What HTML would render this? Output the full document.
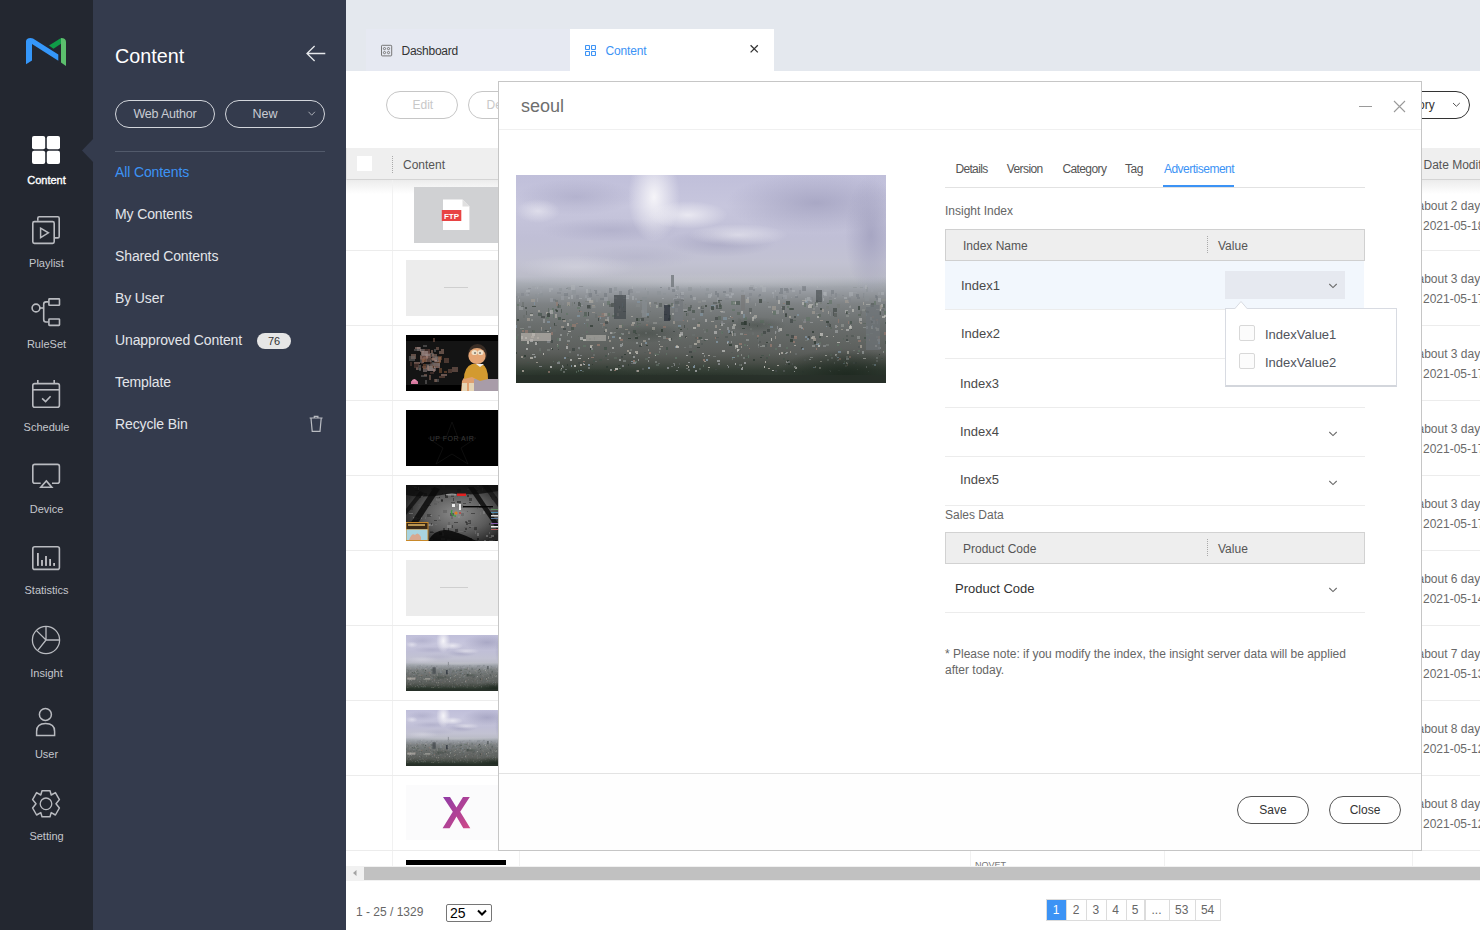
<!DOCTYPE html>
<html><head><meta charset="utf-8">
<style>
*{box-sizing:border-box;margin:0;padding:0}
html,body{width:1480px;height:930px;overflow:hidden;background:#fff;font-family:"Liberation Sans",sans-serif;position:relative}
.a{position:absolute}
.t{position:absolute;white-space:nowrap;line-height:1}
/* left bar */
#nav{left:0;top:0;width:93px;height:930px;background:#232730}
.nl{position:absolute;left:0;width:93px;text-align:center;font-size:11px;color:#c3c6cc;line-height:1;white-space:nowrap}
#side{left:93px;top:0;width:253px;height:930px;background:#343b4d}
.sl{position:absolute;left:22px;font-size:14px;color:#e6e8ec;line-height:1;white-space:nowrap}
/* main */
#tabbar{left:346px;top:0;width:1134px;height:71px;background:#e4e8ee}
.pill{position:absolute;border-radius:15px;text-align:center;white-space:nowrap}
.rowb{position:absolute;left:346px;width:1134px;height:1px;background:#ececec}
.thumb{position:absolute;left:406px;width:92px;height:56px}
.dt{position:absolute;left:1419px;font-size:12px;color:#6a6a6a;line-height:1;white-space:nowrap}

.seoul{background:
 linear-gradient(180deg,rgba(0,0,0,0) 0,rgba(0,0,0,0) 91%,#2e372f 93%,#26302a 100%),
 radial-gradient(ellipse 8% 30% at 12% 70%,rgba(40,50,45,.6),transparent),
 radial-gradient(ellipse 10% 12% at 60% 72%,rgba(60,70,65,.5),transparent),
 radial-gradient(ellipse 12% 20% at 30% 82%,rgba(50,60,50,.55),transparent),
 radial-gradient(ellipse 15% 15% at 80% 75%,rgba(70,75,80,.5),transparent),
 linear-gradient(180deg,#b7b6d2 0%,#c5c4dc 20%,#b9b8d2 35%,#aeaec8 45%,#a9abbd 53%,#9ea2ad 56%,#8f9298 60%,#787b7e 66%,#6a6c6d 75%,#5e605f 85%,#4f5350 91%),
 #888}
.seoul .sun{position:absolute;left:22%;top:0;width:30%;height:45%;background:radial-gradient(ellipse 50% 60% at 50% 40%,rgba(240,240,248,.8),rgba(240,240,248,0))}
.seoul .sun2{position:absolute;left:45%;top:18%;width:30%;height:28%;background:radial-gradient(ellipse 50% 50% at 50% 50%,rgba(225,225,235,.6),rgba(225,225,235,0))}
</style></head><body>
<svg width="0" height="0" style="position:absolute"><symbol id="seoulimg" viewBox="0 0 370 208" preserveAspectRatio="none"><defs><linearGradient id="sky" x1="0" y1="0" x2="0" y2="1"><stop offset="0" stop-color="#c0bfda"/><stop offset="0.15" stop-color="#c7c6dd"/><stop offset="0.3" stop-color="#c0bfd6"/><stop offset="0.42" stop-color="#c2c2d2"/><stop offset="0.49" stop-color="#bbbcc8"/><stop offset="0.52" stop-color="#a9adb5"/><stop offset="0.56" stop-color="#979ba1"/><stop offset="0.62" stop-color="#7e8284"/><stop offset="0.72" stop-color="#6a6e6d"/><stop offset="0.85" stop-color="#5c5f5c"/><stop offset="0.9" stop-color="#4a4f49"/><stop offset="0.94" stop-color="#343e35"/><stop offset="1" stop-color="#273128"/></linearGradient><radialGradient id="sun" cx="0.5" cy="0.5" r="0.5"><stop offset="0" stop-color="#f8f7fa" stop-opacity="0.95"/><stop offset="1" stop-color="#f8f7fa" stop-opacity="0"/></radialGradient><radialGradient id="drk" cx="0.5" cy="0.5" r="0.5"><stop offset="0" stop-color="#9998b8" stop-opacity="0.65"/><stop offset="1" stop-color="#9998b8" stop-opacity="0"/></radialGradient><radialGradient id="tree" cx="0.5" cy="0.5" r="0.5"><stop offset="0" stop-color="#1f2a21" stop-opacity="1"/><stop offset="1" stop-color="#1f2a21" stop-opacity="0"/></radialGradient><radialGradient id="haze" cx="0.5" cy="0.5" r="0.5"><stop offset="0" stop-color="#c4c5cc" stop-opacity="0.6"/><stop offset="1" stop-color="#c4c5cc" stop-opacity="0"/></radialGradient></defs><rect width="370" height="208" fill="url(#sky)"/><ellipse cx="300" cy="28" rx="90" ry="30" fill="url(#drk)"/><ellipse cx="355" cy="60" rx="26" ry="60" fill="url(#drk)"/><ellipse cx="60" cy="22" rx="60" ry="18" fill="url(#drk)" opacity="0.6"/><ellipse cx="95" cy="55" rx="70" ry="12" fill="url(#drk)" opacity="0.55"/><ellipse cx="205" cy="68" rx="55" ry="14" fill="url(#drk)" opacity="0.75"/><ellipse cx="120" cy="82" rx="60" ry="12" fill="url(#drk)" opacity="0.35"/><ellipse cx="138" cy="22" rx="26" ry="45" fill="url(#sun)"/><ellipse cx="172" cy="40" rx="40" ry="14" fill="url(#sun)" opacity="0.75"/><ellipse cx="222" cy="60" rx="50" ry="11" fill="url(#sun)" opacity="0.55"/><ellipse cx="22" cy="36" rx="22" ry="12" fill="url(#sun)" opacity="0.5"/><ellipse cx="60" cy="92" rx="60" ry="12" fill="url(#sun)" opacity="0.25"/><ellipse cx="190" cy="106" rx="190" ry="8" fill="url(#haze)"/><rect x="274" y="164" width="3" height="3" fill="#2f3a33" opacity="0.77"/><rect x="172" y="112" width="4" height="4" fill="#8c9196" opacity="0.50"/><rect x="174" y="120" width="2" height="3" fill="#6f757b" opacity="0.50"/><rect x="271" y="131" width="2" height="2" fill="#617366" opacity="0.64"/><rect x="295" y="124" width="1" height="3" fill="#8c9196" opacity="0.50"/><rect x="360" y="121" width="1" height="4" fill="#8c9196" opacity="0.50"/><rect x="107" y="185" width="3" height="2" fill="#767b78" opacity="0.86"/><rect x="358" y="126" width="2" height="4" fill="#617366" opacity="0.61"/><rect x="134" y="136" width="1" height="1" fill="#6a6f6d" opacity="0.65"/><rect x="302" y="139" width="3" height="3" fill="#5a655d" opacity="0.67"/><rect x="131" y="116" width="2" height="4" fill="#8c9196" opacity="0.50"/><rect x="261" y="151" width="1" height="3" fill="#9a9d9e" opacity="0.72"/><rect x="132" y="192" width="2" height="2" fill="#8396a4" opacity="0.88"/><rect x="214" y="141" width="1" height="1" fill="#c4c3bd" opacity="0.68"/><rect x="353" y="164" width="1" height="2" fill="#947a70" opacity="0.77"/><rect x="131" y="140" width="2" height="3" fill="#535957" opacity="0.67"/><rect x="289" y="161" width="2" height="2" fill="#8396a4" opacity="0.76"/><rect x="34" y="191" width="2" height="2" fill="#b3b4b2" opacity="0.88"/><rect x="342" y="139" width="3" height="2" fill="#5a655d" opacity="0.67"/><rect x="296" y="136" width="3" height="3" fill="#a39d94" opacity="0.66"/><rect x="60" y="196" width="1" height="2" fill="#617366" opacity="0.90"/><rect x="274" y="113" width="2" height="2" fill="#7f848a" opacity="0.50"/><rect x="362" y="123" width="3" height="4" fill="#b0b3b8" opacity="0.50"/><rect x="48" y="182" width="2" height="2" fill="#8396a4" opacity="0.84"/><rect x="161" y="119" width="1" height="4" fill="#b0b3b8" opacity="0.50"/><rect x="341" y="122" width="3" height="2" fill="#6f757b" opacity="0.50"/><rect x="181" y="149" width="3" height="2" fill="#a39d94" opacity="0.71"/><rect x="334" y="150" width="1" height="3" fill="#c4c3bd" opacity="0.71"/><rect x="185" y="164" width="2" height="1" fill="#8e928f" opacity="0.77"/><rect x="203" y="154" width="2" height="1" fill="#b2afa7" opacity="0.73"/><rect x="246" y="170" width="3" height="2" fill="#8e928f" opacity="0.79"/><rect x="98" y="182" width="3" height="2" fill="#5a655d" opacity="0.84"/><rect x="215" y="166" width="1" height="2" fill="#8e928f" opacity="0.78"/><rect x="101" y="138" width="2" height="3" fill="#b2afa7" opacity="0.66"/><rect x="238" y="140" width="3" height="3" fill="#b2afa7" opacity="0.67"/><rect x="64" y="189" width="2" height="2" fill="#b2afa7" opacity="0.87"/><rect x="192" y="192" width="2" height="1" fill="#b2afa7" opacity="0.88"/><rect x="177" y="191" width="2" height="2" fill="#8396a4" opacity="0.88"/><rect x="289" y="125" width="3" height="3" fill="#8396a4" opacity="0.61"/><rect x="205" y="136" width="4" height="2" fill="#9a9d9e" opacity="0.66"/><rect x="217" y="127" width="3" height="2" fill="#c4c3bd" opacity="0.62"/><rect x="15" y="164" width="2" height="1" fill="#84888a" opacity="0.77"/><rect x="41" y="187" width="3" height="2" fill="#84888a" opacity="0.86"/><rect x="130" y="146" width="3" height="1" fill="#767b78" opacity="0.70"/><rect x="334" y="130" width="1" height="2" fill="#8e928f" opacity="0.63"/><rect x="321" y="184" width="2" height="2" fill="#84888a" opacity="0.85"/><rect x="112" y="157" width="2" height="2" fill="#a39d94" opacity="0.74"/><rect x="303" y="192" width="2" height="2" fill="#b2afa7" opacity="0.89"/><rect x="58" y="150" width="2" height="2" fill="#767b78" opacity="0.71"/><rect x="225" y="193" width="2" height="2" fill="#9a9d9e" opacity="0.89"/><rect x="121" y="143" width="4" height="3" fill="#5a655d" opacity="0.68"/><rect x="330" y="164" width="2" height="2" fill="#3f4644" opacity="0.77"/><rect x="177" y="152" width="3" height="2" fill="#c4c3bd" opacity="0.72"/><rect x="96" y="161" width="3" height="2" fill="#8396a4" opacity="0.76"/><rect x="350" y="112" width="2" height="5" fill="#8c9196" opacity="0.50"/><rect x="45" y="151" width="3" height="2" fill="#a39d94" opacity="0.72"/><rect x="50" y="113" width="2" height="3" fill="#6f757b" opacity="0.50"/><rect x="346" y="134" width="3" height="2" fill="#8e928f" opacity="0.65"/><rect x="267" y="183" width="2" height="2" fill="#45524a" opacity="0.85"/><rect x="319" y="155" width="3" height="3" fill="#9a9d9e" opacity="0.73"/><rect x="111" y="175" width="2" height="2" fill="#a39d94" opacity="0.82"/><rect x="10" y="173" width="2" height="2" fill="#b3b4b2" opacity="0.81"/><rect x="93" y="113" width="3" height="5" fill="#6f757b" opacity="0.50"/><rect x="159" y="126" width="4" height="3" fill="#45524a" opacity="0.62"/><rect x="311" y="184" width="2" height="2" fill="#767b78" opacity="0.85"/><rect x="172" y="187" width="2" height="1" fill="#9a9d9e" opacity="0.86"/><rect x="160" y="170" width="2" height="2" fill="#a39d94" opacity="0.79"/><rect x="177" y="122" width="3" height="3" fill="#b0b3b8" opacity="0.50"/><rect x="157" y="156" width="2" height="1" fill="#3f4644" opacity="0.74"/><rect x="32" y="133" width="1" height="4" fill="#5a655d" opacity="0.64"/><rect x="362" y="172" width="3" height="2" fill="#84888a" opacity="0.80"/><rect x="45" y="121" width="3" height="4" fill="#9ea2a8" opacity="0.50"/><rect x="50" y="171" width="2" height="3" fill="#b3b4b2" opacity="0.80"/><rect x="69" y="126" width="4" height="1" fill="#767b78" opacity="0.61"/><rect x="40" y="114" width="2" height="1" fill="#9ea2a8" opacity="0.50"/><rect x="44" y="159" width="2" height="2" fill="#9a9d9e" opacity="0.75"/><rect x="116" y="147" width="3" height="2" fill="#b2afa7" opacity="0.70"/><rect x="51" y="189" width="1" height="2" fill="#2f3a33" opacity="0.87"/><rect x="349" y="135" width="3" height="2" fill="#6a6f6d" opacity="0.65"/><rect x="94" y="157" width="3" height="2" fill="#b3b4b2" opacity="0.74"/><rect x="319" y="179" width="2" height="2" fill="#b3b4b2" opacity="0.83"/><rect x="242" y="171" width="1" height="2" fill="#6a6f6d" opacity="0.80"/><rect x="187" y="184" width="2" height="2" fill="#947a70" opacity="0.85"/><rect x="120" y="151" width="3" height="1" fill="#617366" opacity="0.72"/><rect x="56" y="115" width="4" height="4" fill="#8c9196" opacity="0.50"/><rect x="31" y="174" width="3" height="2" fill="#767b78" opacity="0.81"/><rect x="231" y="122" width="2" height="2" fill="#b0b3b8" opacity="0.50"/><rect x="261" y="190" width="2" height="1" fill="#b2afa7" opacity="0.88"/><rect x="298" y="166" width="2" height="3" fill="#2f3a33" opacity="0.78"/><rect x="367" y="113" width="2" height="2" fill="#9ea2a8" opacity="0.50"/><rect x="12" y="118" width="2" height="1" fill="#7f848a" opacity="0.50"/><rect x="129" y="167" width="2" height="2" fill="#8396a4" opacity="0.78"/><rect x="171" y="138" width="2" height="3" fill="#6a6f6d" opacity="0.66"/><rect x="143" y="142" width="3" height="1" fill="#8e928f" opacity="0.68"/><rect x="303" y="119" width="3" height="3" fill="#9ea2a8" opacity="0.50"/><rect x="12" y="151" width="3" height="2" fill="#84888a" opacity="0.72"/><rect x="249" y="169" width="2" height="3" fill="#535957" opacity="0.79"/><rect x="120" y="178" width="2" height="1" fill="#c4c3bd" opacity="0.82"/><rect x="264" y="113" width="3" height="4" fill="#6f757b" opacity="0.50"/><rect x="360" y="144" width="2" height="2" fill="#947a70" opacity="0.69"/><rect x="25" y="141" width="4" height="2" fill="#3f4644" opacity="0.68"/><rect x="77" y="125" width="1" height="3" fill="#8e928f" opacity="0.61"/><rect x="23" y="111" width="4" height="3" fill="#9ea2a8" opacity="0.50"/><rect x="309" y="113" width="4" height="3" fill="#9ea2a8" opacity="0.50"/><rect x="88" y="172" width="3" height="1" fill="#45524a" opacity="0.80"/><rect x="90" y="115" width="1" height="3" fill="#9ea2a8" opacity="0.50"/><rect x="308" y="114" width="3" height="3" fill="#9ea2a8" opacity="0.50"/><rect x="72" y="192" width="2" height="2" fill="#767b78" opacity="0.88"/><rect x="31" y="156" width="2" height="1" fill="#c4c3bd" opacity="0.74"/><rect x="317" y="161" width="1" height="1" fill="#b2afa7" opacity="0.76"/><rect x="211" y="152" width="2" height="3" fill="#9a9d9e" opacity="0.72"/><rect x="114" y="189" width="2" height="2" fill="#3f4644" opacity="0.87"/><rect x="51" y="158" width="2" height="3" fill="#8e928f" opacity="0.74"/><rect x="116" y="180" width="1" height="1" fill="#3f4644" opacity="0.84"/><rect x="296" y="170" width="3" height="2" fill="#8e928f" opacity="0.79"/><rect x="259" y="115" width="1" height="2" fill="#b0b3b8" opacity="0.50"/><rect x="328" y="186" width="1" height="2" fill="#617366" opacity="0.86"/><rect x="206" y="175" width="3" height="2" fill="#b3b4b2" opacity="0.81"/><rect x="164" y="159" width="3" height="2" fill="#9a9d9e" opacity="0.75"/><rect x="259" y="173" width="2" height="2" fill="#617366" opacity="0.80"/><rect x="119" y="158" width="2" height="1" fill="#45524a" opacity="0.75"/><rect x="106" y="168" width="1" height="3" fill="#9a9d9e" opacity="0.79"/><rect x="19" y="112" width="1" height="2" fill="#b0b3b8" opacity="0.50"/><rect x="226" y="192" width="1" height="1" fill="#b2afa7" opacity="0.88"/><rect x="133" y="127" width="2" height="3" fill="#c4c3bd" opacity="0.62"/><rect x="35" y="173" width="2" height="1" fill="#b3b4b2" opacity="0.80"/><rect x="347" y="148" width="3" height="1" fill="#5a655d" opacity="0.71"/><rect x="84" y="148" width="3" height="1" fill="#84888a" opacity="0.71"/><rect x="346" y="176" width="2" height="3" fill="#9a9d9e" opacity="0.82"/><rect x="301" y="119" width="2" height="1" fill="#9ea2a8" opacity="0.50"/><rect x="213" y="113" width="3" height="4" fill="#7f848a" opacity="0.50"/><rect x="74" y="150" width="3" height="2" fill="#2f3a33" opacity="0.71"/><rect x="278" y="141" width="2" height="2" fill="#3f4644" opacity="0.67"/><rect x="245" y="180" width="3" height="1" fill="#45524a" opacity="0.83"/><rect x="53" y="144" width="3" height="2" fill="#84888a" opacity="0.69"/><rect x="147" y="118" width="3" height="2" fill="#8c9196" opacity="0.50"/><rect x="279" y="178" width="2" height="2" fill="#6a6f6d" opacity="0.83"/><rect x="139" y="179" width="1" height="2" fill="#c4c3bd" opacity="0.83"/><rect x="8" y="180" width="2" height="2" fill="#2f3a33" opacity="0.83"/><rect x="176" y="143" width="3" height="2" fill="#84888a" opacity="0.68"/><rect x="296" y="156" width="2" height="2" fill="#2f3a33" opacity="0.74"/><rect x="106" y="128" width="1" height="4" fill="#8396a4" opacity="0.62"/><rect x="344" y="136" width="2" height="3" fill="#6a6f6d" opacity="0.66"/><rect x="33" y="113" width="4" height="2" fill="#b0b3b8" opacity="0.50"/><rect x="310" y="169" width="3" height="2" fill="#767b78" opacity="0.79"/><rect x="34" y="152" width="1" height="2" fill="#8396a4" opacity="0.72"/><rect x="1" y="144" width="2" height="2" fill="#2f3a33" opacity="0.69"/><rect x="337" y="187" width="2" height="2" fill="#535957" opacity="0.86"/><rect x="329" y="183" width="2" height="2" fill="#3f4644" opacity="0.85"/><rect x="79" y="186" width="2" height="1" fill="#6a6f6d" opacity="0.86"/><rect x="62" y="187" width="2" height="2" fill="#3f4644" opacity="0.86"/><rect x="211" y="166" width="2" height="2" fill="#8396a4" opacity="0.78"/><rect x="157" y="146" width="2" height="3" fill="#a39d94" opacity="0.70"/><rect x="31" y="146" width="3" height="2" fill="#8396a4" opacity="0.70"/><rect x="43" y="113" width="3" height="3" fill="#8c9196" opacity="0.50"/><rect x="121" y="147" width="1" height="3" fill="#5a655d" opacity="0.70"/><rect x="23" y="173" width="2" height="3" fill="#6a6f6d" opacity="0.81"/><rect x="315" y="137" width="3" height="4" fill="#3f4644" opacity="0.66"/><rect x="228" y="187" width="2" height="2" fill="#9a9d9e" opacity="0.86"/><rect x="58" y="127" width="1" height="2" fill="#535957" opacity="0.62"/><rect x="163" y="159" width="2" height="3" fill="#c4c3bd" opacity="0.75"/><rect x="342" y="171" width="3" height="2" fill="#535957" opacity="0.80"/><rect x="301" y="141" width="2" height="2" fill="#c4c3bd" opacity="0.68"/><rect x="252" y="149" width="3" height="1" fill="#617366" opacity="0.71"/><rect x="172" y="191" width="1" height="2" fill="#b2afa7" opacity="0.88"/><rect x="1" y="121" width="2" height="2" fill="#9ea2a8" opacity="0.50"/><rect x="347" y="152" width="3" height="1" fill="#45524a" opacity="0.72"/><rect x="278" y="196" width="1" height="1" fill="#b3b4b2" opacity="0.90"/><rect x="185" y="135" width="3" height="3" fill="#535957" opacity="0.65"/><rect x="125" y="135" width="3" height="3" fill="#84888a" opacity="0.65"/><rect x="365" y="129" width="2" height="3" fill="#b3b4b2" opacity="0.63"/><rect x="36" y="133" width="2" height="4" fill="#617366" opacity="0.64"/><rect x="91" y="184" width="2" height="1" fill="#6a6f6d" opacity="0.85"/><rect x="283" y="110" width="2" height="1" fill="#b0b3b8" opacity="0.50"/><rect x="354" y="158" width="3" height="1" fill="#767b78" opacity="0.75"/><rect x="297" y="127" width="1" height="3" fill="#8e928f" opacity="0.62"/><rect x="310" y="161" width="2" height="1" fill="#c4c3bd" opacity="0.76"/><rect x="288" y="144" width="2" height="3" fill="#84888a" opacity="0.69"/><rect x="156" y="129" width="3" height="4" fill="#8396a4" opacity="0.63"/><rect x="140" y="189" width="3" height="2" fill="#5a655d" opacity="0.87"/><rect x="289" y="123" width="2" height="4" fill="#b0b3b8" opacity="0.50"/><rect x="156" y="129" width="2" height="3" fill="#a39d94" opacity="0.63"/><rect x="234" y="110" width="4" height="4" fill="#9ea2a8" opacity="0.50"/><rect x="141" y="116" width="4" height="4" fill="#8c9196" opacity="0.50"/><rect x="277" y="166" width="2" height="2" fill="#947a70" opacity="0.78"/><rect x="88" y="122" width="4" height="4" fill="#9ea2a8" opacity="0.50"/><rect x="301" y="111" width="1" height="2" fill="#b0b3b8" opacity="0.50"/><rect x="79" y="139" width="2" height="4" fill="#6a6f6d" opacity="0.67"/><rect x="39" y="134" width="2" height="2" fill="#45524a" opacity="0.65"/><rect x="164" y="157" width="3" height="3" fill="#b3b4b2" opacity="0.74"/><rect x="202" y="133" width="3" height="1" fill="#45524a" opacity="0.64"/><rect x="21" y="167" width="1" height="1" fill="#3f4644" opacity="0.78"/><rect x="226" y="153" width="3" height="1" fill="#2f3a33" opacity="0.73"/><rect x="256" y="131" width="4" height="4" fill="#a39d94" opacity="0.63"/><rect x="38" y="148" width="1" height="3" fill="#2f3a33" opacity="0.70"/><rect x="216" y="134" width="3" height="2" fill="#617366" opacity="0.65"/><rect x="62" y="136" width="4" height="1" fill="#947a70" opacity="0.66"/><rect x="78" y="115" width="3" height="1" fill="#6f757b" opacity="0.50"/><rect x="204" y="136" width="3" height="1" fill="#b2afa7" opacity="0.65"/><rect x="1" y="115" width="3" height="3" fill="#9ea2a8" opacity="0.50"/><rect x="33" y="115" width="2" height="2" fill="#b0b3b8" opacity="0.50"/><rect x="102" y="133" width="3" height="3" fill="#8e928f" opacity="0.64"/><rect x="9" y="132" width="2" height="2" fill="#3f4644" opacity="0.64"/><rect x="219" y="170" width="3" height="3" fill="#c4c3bd" opacity="0.80"/><rect x="209" y="161" width="3" height="2" fill="#535957" opacity="0.76"/><rect x="16" y="111" width="4" height="3" fill="#9ea2a8" opacity="0.50"/><rect x="152" y="112" width="2" height="3" fill="#7f848a" opacity="0.50"/><rect x="82" y="163" width="3" height="1" fill="#6a6f6d" opacity="0.76"/><rect x="219" y="172" width="1" height="2" fill="#a39d94" opacity="0.80"/><rect x="330" y="166" width="3" height="1" fill="#8e928f" opacity="0.78"/><rect x="279" y="120" width="2" height="2" fill="#9ea2a8" opacity="0.50"/><rect x="119" y="186" width="2" height="2" fill="#617366" opacity="0.86"/><rect x="80" y="123" width="2" height="4" fill="#8c9196" opacity="0.50"/><rect x="56" y="149" width="4" height="3" fill="#947a70" opacity="0.71"/><rect x="241" y="163" width="1" height="1" fill="#45524a" opacity="0.77"/><rect x="186" y="125" width="4" height="2" fill="#9a9d9e" opacity="0.61"/><rect x="99" y="122" width="3" height="3" fill="#8c9196" opacity="0.50"/><rect x="245" y="158" width="2" height="3" fill="#5a655d" opacity="0.74"/><rect x="40" y="135" width="2" height="2" fill="#2f3a33" opacity="0.65"/><rect x="233" y="133" width="3" height="4" fill="#535957" opacity="0.64"/><rect x="41" y="169" width="1" height="3" fill="#a39d94" opacity="0.79"/><rect x="216" y="183" width="1" height="2" fill="#617366" opacity="0.85"/><rect x="124" y="125" width="3" height="1" fill="#5a655d" opacity="0.61"/><rect x="115" y="186" width="2" height="1" fill="#8396a4" opacity="0.86"/><rect x="112" y="115" width="2" height="5" fill="#6f757b" opacity="0.50"/><rect x="171" y="145" width="1" height="2" fill="#a39d94" opacity="0.69"/><rect x="252" y="166" width="2" height="2" fill="#6a6f6d" opacity="0.78"/><rect x="38" y="150" width="3" height="1" fill="#535957" opacity="0.71"/><rect x="365" y="117" width="3" height="3" fill="#b0b3b8" opacity="0.50"/><rect x="168" y="136" width="3" height="1" fill="#2f3a33" opacity="0.66"/><rect x="49" y="194" width="2" height="1" fill="#767b78" opacity="0.89"/><rect x="300" y="138" width="3" height="1" fill="#84888a" opacity="0.66"/><rect x="237" y="184" width="2" height="2" fill="#2f3a33" opacity="0.85"/><rect x="61" y="132" width="3" height="2" fill="#617366" opacity="0.64"/><rect x="224" y="175" width="1" height="1" fill="#535957" opacity="0.82"/><rect x="87" y="148" width="2" height="3" fill="#947a70" opacity="0.71"/><rect x="172" y="132" width="3" height="4" fill="#45524a" opacity="0.64"/><rect x="215" y="119" width="2" height="2" fill="#9ea2a8" opacity="0.50"/><rect x="206" y="157" width="1" height="1" fill="#45524a" opacity="0.74"/><rect x="181" y="165" width="3" height="3" fill="#a39d94" opacity="0.77"/><rect x="21" y="162" width="2" height="2" fill="#a39d94" opacity="0.76"/><rect x="361" y="146" width="1" height="3" fill="#84888a" opacity="0.70"/><rect x="349" y="110" width="2" height="4" fill="#b0b3b8" opacity="0.50"/><rect x="310" y="146" width="3" height="2" fill="#2f3a33" opacity="0.70"/><rect x="263" y="153" width="3" height="3" fill="#c4c3bd" opacity="0.73"/><rect x="241" y="160" width="2" height="2" fill="#947a70" opacity="0.75"/><rect x="16" y="182" width="2" height="2" fill="#535957" opacity="0.84"/><rect x="63" y="173" width="1" height="2" fill="#617366" opacity="0.81"/><rect x="142" y="166" width="2" height="1" fill="#8e928f" opacity="0.78"/><rect x="76" y="189" width="1" height="1" fill="#2f3a33" opacity="0.87"/><rect x="215" y="142" width="2" height="1" fill="#947a70" opacity="0.68"/><rect x="269" y="177" width="3" height="2" fill="#9a9d9e" opacity="0.82"/><rect x="21" y="123" width="1" height="4" fill="#9ea2a8" opacity="0.50"/><rect x="329" y="125" width="4" height="3" fill="#a39d94" opacity="0.61"/><rect x="9" y="155" width="3" height="3" fill="#947a70" opacity="0.73"/><rect x="227" y="182" width="2" height="2" fill="#767b78" opacity="0.84"/><rect x="327" y="112" width="4" height="2" fill="#9ea2a8" opacity="0.50"/><rect x="74" y="170" width="2" height="3" fill="#c4c3bd" opacity="0.79"/><rect x="1" y="129" width="2" height="2" fill="#617366" opacity="0.63"/><rect x="286" y="144" width="1" height="2" fill="#767b78" opacity="0.69"/><rect x="149" y="129" width="2" height="2" fill="#9a9d9e" opacity="0.63"/><rect x="194" y="134" width="2" height="3" fill="#8e928f" opacity="0.65"/><rect x="322" y="176" width="3" height="2" fill="#8396a4" opacity="0.82"/><rect x="333" y="181" width="2" height="2" fill="#947a70" opacity="0.84"/><rect x="75" y="173" width="2" height="2" fill="#84888a" opacity="0.81"/><rect x="197" y="127" width="4" height="2" fill="#535957" opacity="0.62"/><rect x="160" y="171" width="3" height="2" fill="#c4c3bd" opacity="0.80"/><rect x="55" y="111" width="2" height="1" fill="#9ea2a8" opacity="0.50"/><rect x="173" y="170" width="3" height="3" fill="#6a6f6d" opacity="0.80"/><rect x="136" y="152" width="3" height="3" fill="#b2afa7" opacity="0.72"/><rect x="177" y="175" width="3" height="2" fill="#5a655d" opacity="0.81"/><rect x="199" y="162" width="1" height="2" fill="#947a70" opacity="0.76"/><rect x="6" y="194" width="2" height="1" fill="#2f3a33" opacity="0.89"/><rect x="199" y="116" width="2" height="4" fill="#6f757b" opacity="0.50"/><rect x="30" y="137" width="2" height="2" fill="#b2afa7" opacity="0.66"/><rect x="288" y="184" width="2" height="2" fill="#535957" opacity="0.85"/><rect x="329" y="190" width="2" height="2" fill="#6a6f6d" opacity="0.87"/><rect x="190" y="113" width="3" height="3" fill="#8c9196" opacity="0.50"/><rect x="228" y="146" width="3" height="4" fill="#2f3a33" opacity="0.70"/><rect x="107" y="131" width="1" height="2" fill="#617366" opacity="0.64"/><rect x="35" y="135" width="2" height="4" fill="#6a6f6d" opacity="0.65"/><rect x="322" y="195" width="2" height="1" fill="#5a655d" opacity="0.90"/><rect x="319" y="118" width="2" height="4" fill="#7f848a" opacity="0.50"/><rect x="344" y="170" width="2" height="3" fill="#a39d94" opacity="0.80"/><rect x="304" y="133" width="2" height="2" fill="#2f3a33" opacity="0.64"/><rect x="189" y="118" width="4" height="3" fill="#8c9196" opacity="0.50"/><rect x="150" y="163" width="2" height="1" fill="#947a70" opacity="0.77"/><rect x="14" y="138" width="3" height="2" fill="#535957" opacity="0.66"/><rect x="165" y="125" width="3" height="1" fill="#535957" opacity="0.61"/><rect x="259" y="161" width="1" height="3" fill="#a39d94" opacity="0.76"/><rect x="105" y="164" width="2" height="1" fill="#947a70" opacity="0.77"/><rect x="257" y="136" width="3" height="4" fill="#617366" opacity="0.65"/><rect x="229" y="182" width="3" height="1" fill="#45524a" opacity="0.84"/><rect x="314" y="196" width="1" height="1" fill="#8e928f" opacity="0.90"/><rect x="290" y="142" width="4" height="4" fill="#617366" opacity="0.68"/><rect x="166" y="145" width="2" height="1" fill="#947a70" opacity="0.69"/><rect x="67" y="141" width="4" height="1" fill="#617366" opacity="0.68"/><rect x="72" y="137" width="1" height="4" fill="#2f3a33" opacity="0.66"/><rect x="106" y="149" width="1" height="3" fill="#617366" opacity="0.71"/><rect x="185" y="131" width="3" height="3" fill="#535957" opacity="0.64"/><rect x="113" y="177" width="2" height="2" fill="#c4c3bd" opacity="0.82"/><rect x="5" y="183" width="1" height="1" fill="#45524a" opacity="0.85"/><rect x="17" y="155" width="2" height="3" fill="#5a655d" opacity="0.73"/><rect x="169" y="129" width="1" height="1" fill="#767b78" opacity="0.63"/><rect x="257" y="119" width="1" height="4" fill="#9ea2a8" opacity="0.50"/><rect x="331" y="176" width="2" height="3" fill="#b2afa7" opacity="0.82"/><rect x="94" y="177" width="1" height="1" fill="#6a6f6d" opacity="0.82"/><rect x="89" y="144" width="4" height="3" fill="#a39d94" opacity="0.69"/><rect x="86" y="150" width="1" height="3" fill="#767b78" opacity="0.71"/><rect x="212" y="143" width="2" height="1" fill="#8e928f" opacity="0.68"/><rect x="55" y="110" width="4" height="5" fill="#b0b3b8" opacity="0.50"/><rect x="354" y="142" width="2" height="3" fill="#9a9d9e" opacity="0.68"/><rect x="119" y="161" width="2" height="2" fill="#767b78" opacity="0.76"/><rect x="293" y="184" width="2" height="1" fill="#9a9d9e" opacity="0.85"/><rect x="74" y="161" width="3" height="2" fill="#6a6f6d" opacity="0.76"/><rect x="76" y="130" width="3" height="3" fill="#a39d94" opacity="0.63"/><rect x="51" y="182" width="2" height="1" fill="#45524a" opacity="0.84"/><rect x="162" y="129" width="2" height="2" fill="#c4c3bd" opacity="0.63"/><rect x="296" y="161" width="3" height="3" fill="#b2afa7" opacity="0.76"/><rect x="350" y="159" width="3" height="1" fill="#9a9d9e" opacity="0.75"/><rect x="224" y="158" width="3" height="2" fill="#8e928f" opacity="0.75"/><rect x="315" y="182" width="2" height="2" fill="#767b78" opacity="0.84"/><rect x="207" y="148" width="2" height="1" fill="#9a9d9e" opacity="0.71"/><rect x="67" y="189" width="2" height="1" fill="#c4c3bd" opacity="0.87"/><rect x="306" y="134" width="2" height="3" fill="#a39d94" opacity="0.65"/><rect x="231" y="170" width="1" height="1" fill="#8e928f" opacity="0.79"/><rect x="140" y="179" width="3" height="1" fill="#617366" opacity="0.83"/><rect x="55" y="152" width="3" height="3" fill="#45524a" opacity="0.72"/><rect x="23" y="191" width="3" height="1" fill="#84888a" opacity="0.88"/><rect x="286" y="127" width="2" height="3" fill="#c4c3bd" opacity="0.62"/><rect x="228" y="142" width="3" height="3" fill="#617366" opacity="0.68"/><rect x="262" y="171" width="2" height="1" fill="#84888a" opacity="0.80"/><rect x="363" y="134" width="2" height="3" fill="#c4c3bd" opacity="0.65"/><rect x="173" y="176" width="3" height="2" fill="#3f4644" opacity="0.82"/><rect x="120" y="195" width="2" height="2" fill="#6a6f6d" opacity="0.90"/><rect x="165" y="121" width="3" height="3" fill="#9ea2a8" opacity="0.50"/><rect x="54" y="184" width="2" height="2" fill="#b3b4b2" opacity="0.85"/><rect x="297" y="192" width="2" height="1" fill="#8396a4" opacity="0.89"/><rect x="68" y="148" width="1" height="1" fill="#8396a4" opacity="0.70"/><rect x="247" y="156" width="3" height="3" fill="#3f4644" opacity="0.74"/><rect x="183" y="193" width="2" height="2" fill="#5a655d" opacity="0.89"/><rect x="355" y="114" width="2" height="3" fill="#9ea2a8" opacity="0.50"/><rect x="203" y="128" width="2" height="4" fill="#3f4644" opacity="0.62"/><rect x="89" y="180" width="2" height="2" fill="#45524a" opacity="0.83"/><rect x="153" y="130" width="2" height="2" fill="#5a655d" opacity="0.63"/><rect x="55" y="120" width="2" height="4" fill="#b0b3b8" opacity="0.50"/><rect x="367" y="176" width="1" height="2" fill="#8e928f" opacity="0.82"/><rect x="194" y="120" width="2" height="2" fill="#9ea2a8" opacity="0.50"/><rect x="111" y="119" width="1" height="4" fill="#8c9196" opacity="0.50"/><rect x="350" y="137" width="1" height="4" fill="#8396a4" opacity="0.66"/><rect x="42" y="143" width="3" height="2" fill="#617366" opacity="0.68"/><rect x="300" y="173" width="1" height="2" fill="#947a70" opacity="0.81"/><rect x="266" y="122" width="3" height="2" fill="#6f757b" opacity="0.50"/><rect x="103" y="184" width="2" height="2" fill="#9a9d9e" opacity="0.85"/><rect x="115" y="149" width="3" height="2" fill="#a39d94" opacity="0.71"/><rect x="28" y="155" width="3" height="1" fill="#3f4644" opacity="0.73"/><rect x="188" y="165" width="2" height="1" fill="#45524a" opacity="0.77"/><rect x="136" y="155" width="1" height="1" fill="#535957" opacity="0.73"/><rect x="153" y="163" width="3" height="2" fill="#3f4644" opacity="0.77"/><rect x="335" y="187" width="1" height="1" fill="#45524a" opacity="0.86"/><rect x="25" y="152" width="1" height="3" fill="#a39d94" opacity="0.72"/><rect x="160" y="195" width="2" height="1" fill="#84888a" opacity="0.90"/><rect x="19" y="167" width="2" height="3" fill="#b3b4b2" opacity="0.78"/><rect x="87" y="128" width="1" height="3" fill="#c4c3bd" opacity="0.62"/><rect x="350" y="129" width="4" height="3" fill="#b3b4b2" opacity="0.63"/><rect x="60" y="148" width="2" height="1" fill="#947a70" opacity="0.71"/><rect x="363" y="136" width="2" height="4" fill="#3f4644" opacity="0.65"/><rect x="103" y="116" width="3" height="4" fill="#6f757b" opacity="0.50"/><rect x="129" y="113" width="2" height="2" fill="#8c9196" opacity="0.50"/><rect x="152" y="143" width="3" height="2" fill="#3f4644" opacity="0.68"/><rect x="278" y="161" width="3" height="1" fill="#84888a" opacity="0.76"/><rect x="73" y="118" width="3" height="4" fill="#6f757b" opacity="0.50"/><rect x="249" y="186" width="1" height="2" fill="#b2afa7" opacity="0.86"/><rect x="42" y="129" width="1" height="4" fill="#3f4644" opacity="0.63"/><rect x="153" y="140" width="2" height="3" fill="#45524a" opacity="0.67"/><rect x="85" y="138" width="4" height="4" fill="#947a70" opacity="0.66"/><rect x="32" y="138" width="2" height="4" fill="#6a6f6d" opacity="0.66"/><rect x="225" y="136" width="2" height="3" fill="#c4c3bd" opacity="0.66"/><rect x="350" y="151" width="2" height="3" fill="#9a9d9e" opacity="0.72"/><rect x="263" y="178" width="1" height="2" fill="#c4c3bd" opacity="0.83"/><rect x="262" y="154" width="2" height="3" fill="#9a9d9e" opacity="0.73"/><rect x="320" y="183" width="2" height="2" fill="#535957" opacity="0.85"/><rect x="81" y="170" width="3" height="1" fill="#5a655d" opacity="0.80"/><rect x="329" y="135" width="3" height="3" fill="#b3b4b2" opacity="0.65"/><rect x="179" y="162" width="3" height="2" fill="#947a70" opacity="0.76"/><rect x="98" y="138" width="2" height="4" fill="#617366" opacity="0.66"/><rect x="208" y="151" width="3" height="2" fill="#6a6f6d" opacity="0.71"/><rect x="31" y="179" width="1" height="2" fill="#535957" opacity="0.83"/><rect x="365" y="183" width="2" height="2" fill="#45524a" opacity="0.85"/><rect x="119" y="162" width="3" height="2" fill="#2f3a33" opacity="0.76"/><rect x="233" y="178" width="1" height="3" fill="#535957" opacity="0.83"/><rect x="335" y="153" width="1" height="2" fill="#3f4644" opacity="0.72"/><rect x="143" y="176" width="1" height="2" fill="#767b78" opacity="0.82"/><rect x="163" y="188" width="1" height="2" fill="#535957" opacity="0.87"/><rect x="292" y="161" width="2" height="3" fill="#3f4644" opacity="0.76"/><rect x="330" y="160" width="2" height="2" fill="#535957" opacity="0.75"/><rect x="203" y="130" width="3" height="4" fill="#45524a" opacity="0.63"/><rect x="51" y="112" width="4" height="3" fill="#8c9196" opacity="0.50"/><rect x="143" y="169" width="1" height="1" fill="#b2afa7" opacity="0.79"/><rect x="169" y="161" width="2" height="2" fill="#3f4644" opacity="0.76"/><rect x="130" y="138" width="3" height="3" fill="#8396a4" opacity="0.66"/><rect x="267" y="120" width="4" height="4" fill="#9ea2a8" opacity="0.50"/><rect x="299" y="127" width="3" height="4" fill="#5a655d" opacity="0.62"/><rect x="332" y="138" width="2" height="1" fill="#8e928f" opacity="0.66"/><rect x="46" y="144" width="3" height="1" fill="#2f3a33" opacity="0.69"/><rect x="71" y="123" width="4" height="3" fill="#b0b3b8" opacity="0.50"/><rect x="222" y="143" width="2" height="4" fill="#6a6f6d" opacity="0.68"/><rect x="327" y="188" width="2" height="1" fill="#8396a4" opacity="0.87"/><rect x="219" y="188" width="1" height="2" fill="#b3b4b2" opacity="0.87"/><rect x="55" y="161" width="1" height="2" fill="#84888a" opacity="0.76"/><rect x="250" y="182" width="2" height="2" fill="#45524a" opacity="0.84"/><rect x="207" y="116" width="3" height="2" fill="#6f757b" opacity="0.50"/><rect x="16" y="179" width="3" height="1" fill="#9a9d9e" opacity="0.83"/><rect x="304" y="158" width="1" height="1" fill="#9a9d9e" opacity="0.75"/><rect x="88" y="156" width="2" height="1" fill="#3f4644" opacity="0.74"/><rect x="42" y="142" width="3" height="3" fill="#45524a" opacity="0.68"/><rect x="82" y="137" width="4" height="3" fill="#767b78" opacity="0.66"/><rect x="71" y="130" width="4" height="4" fill="#535957" opacity="0.63"/><rect x="143" y="173" width="2" height="2" fill="#8e928f" opacity="0.81"/><rect x="178" y="190" width="1" height="1" fill="#8396a4" opacity="0.88"/><rect x="58" y="190" width="2" height="2" fill="#c4c3bd" opacity="0.88"/><rect x="39" y="139" width="2" height="4" fill="#b2afa7" opacity="0.67"/><rect x="200" y="166" width="2" height="2" fill="#8396a4" opacity="0.78"/><rect x="181" y="172" width="3" height="1" fill="#2f3a33" opacity="0.80"/><rect x="368" y="157" width="3" height="3" fill="#947a70" opacity="0.74"/><rect x="45" y="193" width="1" height="2" fill="#b2afa7" opacity="0.89"/><rect x="317" y="133" width="4" height="4" fill="#3f4644" opacity="0.64"/><rect x="321" y="167" width="3" height="1" fill="#c4c3bd" opacity="0.78"/><rect x="96" y="157" width="3" height="2" fill="#767b78" opacity="0.74"/><rect x="159" y="171" width="1" height="2" fill="#8396a4" opacity="0.80"/><rect x="41" y="130" width="4" height="3" fill="#5a655d" opacity="0.63"/><rect x="254" y="169" width="2" height="3" fill="#947a70" opacity="0.79"/><rect x="144" y="171" width="3" height="1" fill="#a39d94" opacity="0.80"/><rect x="216" y="182" width="3" height="1" fill="#8396a4" opacity="0.84"/><rect x="352" y="196" width="1" height="1" fill="#5a655d" opacity="0.90"/><rect x="137" y="147" width="4" height="2" fill="#8e928f" opacity="0.70"/><rect x="96" y="177" width="3" height="1" fill="#6a6f6d" opacity="0.82"/><rect x="229" y="124" width="1" height="4" fill="#8e928f" opacity="0.61"/><rect x="270" y="172" width="2" height="2" fill="#617366" opacity="0.80"/><rect x="366" y="134" width="2" height="2" fill="#6a6f6d" opacity="0.65"/><rect x="360" y="121" width="2" height="4" fill="#6f757b" opacity="0.50"/><rect x="140" y="131" width="2" height="2" fill="#617366" opacity="0.64"/><rect x="103" y="162" width="2" height="2" fill="#c4c3bd" opacity="0.76"/><rect x="303" y="167" width="2" height="2" fill="#617366" opacity="0.78"/><rect x="326" y="120" width="2" height="1" fill="#7f848a" opacity="0.50"/><rect x="6" y="154" width="2" height="1" fill="#5a655d" opacity="0.73"/><rect x="88" y="138" width="3" height="3" fill="#a39d94" opacity="0.67"/><rect x="37" y="124" width="3" height="2" fill="#6f757b" opacity="0.50"/><rect x="199" y="142" width="3" height="3" fill="#3f4644" opacity="0.68"/><rect x="67" y="164" width="3" height="2" fill="#c4c3bd" opacity="0.77"/><rect x="182" y="132" width="2" height="2" fill="#c4c3bd" opacity="0.64"/><rect x="195" y="146" width="3" height="1" fill="#b2afa7" opacity="0.69"/><rect x="0" y="161" width="2" height="3" fill="#617366" opacity="0.76"/><rect x="362" y="164" width="2" height="3" fill="#9a9d9e" opacity="0.77"/><rect x="163" y="121" width="3" height="2" fill="#9ea2a8" opacity="0.50"/><rect x="168" y="172" width="2" height="1" fill="#767b78" opacity="0.80"/><rect x="265" y="177" width="2" height="2" fill="#b2afa7" opacity="0.82"/><rect x="28" y="153" width="1" height="3" fill="#6a6f6d" opacity="0.72"/><rect x="55" y="190" width="1" height="2" fill="#8396a4" opacity="0.88"/><rect x="83" y="184" width="3" height="2" fill="#45524a" opacity="0.85"/><rect x="182" y="147" width="2" height="2" fill="#5a655d" opacity="0.70"/><rect x="3" y="131" width="4" height="4" fill="#9a9d9e" opacity="0.64"/><rect x="303" y="168" width="2" height="3" fill="#6a6f6d" opacity="0.78"/><rect x="204" y="149" width="2" height="1" fill="#45524a" opacity="0.71"/><rect x="295" y="131" width="2" height="2" fill="#5a655d" opacity="0.64"/><rect x="83" y="160" width="3" height="2" fill="#6a6f6d" opacity="0.75"/><rect x="121" y="195" width="2" height="2" fill="#a39d94" opacity="0.89"/><rect x="98" y="122" width="3" height="2" fill="#b0b3b8" opacity="0.50"/><rect x="228" y="169" width="2" height="2" fill="#617366" opacity="0.79"/><rect x="247" y="122" width="3" height="4" fill="#8c9196" opacity="0.50"/><rect x="116" y="111" width="1" height="5" fill="#b0b3b8" opacity="0.50"/><rect x="89" y="146" width="3" height="3" fill="#3f4644" opacity="0.70"/><rect x="350" y="159" width="3" height="2" fill="#617366" opacity="0.75"/><rect x="300" y="168" width="3" height="2" fill="#8396a4" opacity="0.79"/><rect x="356" y="189" width="2" height="1" fill="#5a655d" opacity="0.87"/><rect x="294" y="123" width="2" height="4" fill="#9ea2a8" opacity="0.50"/><rect x="278" y="170" width="2" height="1" fill="#b2afa7" opacity="0.80"/><rect x="322" y="144" width="1" height="4" fill="#947a70" opacity="0.69"/><rect x="9" y="117" width="3" height="1" fill="#9ea2a8" opacity="0.50"/><rect x="269" y="139" width="2" height="3" fill="#2f3a33" opacity="0.67"/><rect x="147" y="161" width="3" height="3" fill="#8e928f" opacity="0.76"/><rect x="36" y="173" width="1" height="2" fill="#2f3a33" opacity="0.81"/><rect x="7" y="140" width="2" height="3" fill="#6a6f6d" opacity="0.67"/><rect x="51" y="127" width="3" height="4" fill="#a39d94" opacity="0.62"/><rect x="347" y="183" width="3" height="1" fill="#c4c3bd" opacity="0.85"/><rect x="349" y="121" width="4" height="5" fill="#8c9196" opacity="0.50"/><rect x="270" y="159" width="3" height="2" fill="#45524a" opacity="0.75"/><rect x="186" y="178" width="2" height="1" fill="#b3b4b2" opacity="0.83"/><rect x="286" y="196" width="2" height="2" fill="#2f3a33" opacity="0.90"/><rect x="120" y="129" width="4" height="3" fill="#84888a" opacity="0.63"/><rect x="67" y="186" width="2" height="1" fill="#947a70" opacity="0.86"/><rect x="99" y="115" width="2" height="2" fill="#9ea2a8" opacity="0.50"/><rect x="268" y="177" width="2" height="1" fill="#45524a" opacity="0.82"/><rect x="318" y="187" width="1" height="2" fill="#767b78" opacity="0.86"/><rect x="309" y="180" width="2" height="1" fill="#c4c3bd" opacity="0.84"/><rect x="60" y="120" width="3" height="4" fill="#7f848a" opacity="0.50"/><rect x="243" y="124" width="3" height="4" fill="#2f3a33" opacity="0.61"/><rect x="1" y="159" width="2" height="2" fill="#6a6f6d" opacity="0.75"/><rect x="53" y="176" width="2" height="2" fill="#767b78" opacity="0.82"/><rect x="321" y="169" width="2" height="2" fill="#617366" opacity="0.79"/><rect x="288" y="147" width="2" height="1" fill="#947a70" opacity="0.70"/><rect x="127" y="165" width="3" height="2" fill="#a39d94" opacity="0.77"/><rect x="216" y="158" width="1" height="3" fill="#b2afa7" opacity="0.75"/><rect x="267" y="135" width="1" height="3" fill="#b2afa7" opacity="0.65"/><rect x="341" y="194" width="1" height="1" fill="#767b78" opacity="0.89"/><rect x="65" y="130" width="2" height="1" fill="#9a9d9e" opacity="0.63"/><rect x="256" y="117" width="2" height="2" fill="#b0b3b8" opacity="0.50"/><rect x="159" y="120" width="3" height="1" fill="#6f757b" opacity="0.50"/><rect x="11" y="166" width="2" height="3" fill="#c4c3bd" opacity="0.78"/><rect x="131" y="189" width="2" height="1" fill="#3f4644" opacity="0.87"/><rect x="320" y="180" width="1" height="2" fill="#767b78" opacity="0.83"/><rect x="73" y="163" width="2" height="2" fill="#45524a" opacity="0.77"/><rect x="152" y="163" width="2" height="2" fill="#a39d94" opacity="0.77"/><rect x="188" y="180" width="1" height="2" fill="#8e928f" opacity="0.83"/><rect x="299" y="191" width="1" height="2" fill="#a39d94" opacity="0.88"/><rect x="356" y="141" width="2" height="2" fill="#947a70" opacity="0.68"/><rect x="341" y="161" width="3" height="3" fill="#8e928f" opacity="0.76"/><rect x="188" y="156" width="2" height="2" fill="#767b78" opacity="0.74"/><rect x="244" y="171" width="2" height="1" fill="#8e928f" opacity="0.80"/><rect x="283" y="150" width="3" height="3" fill="#a39d94" opacity="0.71"/><rect x="56" y="127" width="1" height="4" fill="#767b78" opacity="0.62"/><rect x="269" y="138" width="2" height="2" fill="#3f4644" opacity="0.66"/><rect x="237" y="141" width="3" height="3" fill="#9a9d9e" opacity="0.68"/><rect x="205" y="156" width="2" height="3" fill="#617366" opacity="0.74"/><rect x="122" y="184" width="1" height="2" fill="#9a9d9e" opacity="0.85"/><rect x="347" y="127" width="1" height="3" fill="#b2afa7" opacity="0.62"/><rect x="123" y="170" width="3" height="2" fill="#3f4644" opacity="0.79"/><rect x="201" y="118" width="2" height="4" fill="#6f757b" opacity="0.50"/><rect x="175" y="181" width="2" height="2" fill="#2f3a33" opacity="0.84"/><rect x="271" y="178" width="2" height="2" fill="#535957" opacity="0.83"/><rect x="12" y="113" width="3" height="1" fill="#7f848a" opacity="0.50"/><rect x="213" y="121" width="3" height="2" fill="#b0b3b8" opacity="0.50"/><rect x="72" y="189" width="2" height="2" fill="#8396a4" opacity="0.87"/><rect x="170" y="193" width="2" height="1" fill="#6a6f6d" opacity="0.89"/><rect x="159" y="182" width="2" height="2" fill="#617366" opacity="0.84"/><rect x="70" y="144" width="3" height="2" fill="#8e928f" opacity="0.69"/><rect x="117" y="155" width="3" height="3" fill="#45524a" opacity="0.73"/><rect x="24" y="176" width="1" height="2" fill="#5a655d" opacity="0.82"/><rect x="213" y="120" width="3" height="3" fill="#9ea2a8" opacity="0.50"/><rect x="304" y="145" width="3" height="1" fill="#a39d94" opacity="0.69"/><rect x="209" y="119" width="4" height="4" fill="#b0b3b8" opacity="0.50"/><rect x="96" y="172" width="2" height="2" fill="#b3b4b2" opacity="0.80"/><rect x="105" y="158" width="3" height="2" fill="#9a9d9e" opacity="0.74"/><rect x="211" y="190" width="1" height="1" fill="#8e928f" opacity="0.88"/><rect x="104" y="159" width="2" height="1" fill="#617366" opacity="0.75"/><rect x="67" y="188" width="1" height="2" fill="#84888a" opacity="0.87"/><rect x="143" y="146" width="3" height="2" fill="#6a6f6d" opacity="0.70"/><rect x="14" y="182" width="3" height="2" fill="#b2afa7" opacity="0.84"/><rect x="188" y="186" width="2" height="1" fill="#a39d94" opacity="0.86"/><rect x="84" y="141" width="1" height="3" fill="#8396a4" opacity="0.68"/><rect x="286" y="125" width="4" height="1" fill="#b2afa7" opacity="0.61"/><rect x="337" y="117" width="4" height="1" fill="#9ea2a8" opacity="0.50"/><rect x="290" y="122" width="3" height="3" fill="#8c9196" opacity="0.50"/><rect x="283" y="115" width="2" height="4" fill="#7f848a" opacity="0.50"/><rect x="218" y="158" width="2" height="3" fill="#84888a" opacity="0.74"/><rect x="52" y="156" width="3" height="1" fill="#c4c3bd" opacity="0.74"/><rect x="330" y="136" width="2" height="3" fill="#45524a" opacity="0.65"/><rect x="67" y="170" width="3" height="2" fill="#617366" opacity="0.79"/><rect x="259" y="156" width="2" height="2" fill="#767b78" opacity="0.74"/><rect x="15" y="124" width="4" height="3" fill="#a39d94" opacity="0.61"/><rect x="16" y="155" width="1" height="2" fill="#535957" opacity="0.73"/><rect x="14" y="144" width="1" height="1" fill="#6a6f6d" opacity="0.69"/><rect x="202" y="188" width="2" height="2" fill="#84888a" opacity="0.87"/><rect x="151" y="192" width="2" height="2" fill="#84888a" opacity="0.88"/><rect x="108" y="179" width="2" height="1" fill="#2f3a33" opacity="0.83"/><rect x="81" y="169" width="3" height="2" fill="#947a70" opacity="0.79"/><rect x="230" y="164" width="3" height="2" fill="#8e928f" opacity="0.77"/><rect x="199" y="194" width="2" height="1" fill="#3f4644" opacity="0.89"/><rect x="46" y="127" width="2" height="3" fill="#84888a" opacity="0.62"/><rect x="314" y="179" width="2" height="2" fill="#5a655d" opacity="0.83"/><rect x="68" y="122" width="3" height="2" fill="#8c9196" opacity="0.50"/><rect x="19" y="159" width="2" height="3" fill="#535957" opacity="0.75"/><rect x="332" y="146" width="1" height="3" fill="#947a70" opacity="0.70"/><rect x="217" y="149" width="3" height="2" fill="#c4c3bd" opacity="0.71"/><rect x="90" y="191" width="2" height="2" fill="#2f3a33" opacity="0.88"/><rect x="310" y="151" width="1" height="1" fill="#8396a4" opacity="0.72"/><rect x="6" y="167" width="3" height="1" fill="#5a655d" opacity="0.78"/><rect x="130" y="113" width="1" height="2" fill="#b0b3b8" opacity="0.50"/><rect x="265" y="132" width="2" height="1" fill="#9a9d9e" opacity="0.64"/><rect x="66" y="196" width="2" height="1" fill="#5a655d" opacity="0.90"/><rect x="237" y="114" width="2" height="2" fill="#7f848a" opacity="0.50"/><rect x="248" y="191" width="1" height="2" fill="#c4c3bd" opacity="0.88"/><rect x="16" y="158" width="3" height="3" fill="#c4c3bd" opacity="0.75"/><rect x="147" y="151" width="3" height="2" fill="#947a70" opacity="0.72"/><rect x="125" y="143" width="3" height="3" fill="#3f4644" opacity="0.69"/><rect x="76" y="131" width="4" height="2" fill="#84888a" opacity="0.63"/><rect x="15" y="161" width="3" height="2" fill="#a39d94" opacity="0.76"/><rect x="172" y="194" width="2" height="2" fill="#6a6f6d" opacity="0.89"/><rect x="120" y="116" width="4" height="2" fill="#9ea2a8" opacity="0.50"/><rect x="233" y="148" width="1" height="3" fill="#3f4644" opacity="0.71"/><rect x="270" y="126" width="4" height="4" fill="#2f3a33" opacity="0.62"/><rect x="368" y="140" width="3" height="2" fill="#c4c3bd" opacity="0.67"/><rect x="330" y="154" width="3" height="2" fill="#b3b4b2" opacity="0.73"/><rect x="250" y="167" width="2" height="1" fill="#2f3a33" opacity="0.78"/><rect x="368" y="175" width="3" height="2" fill="#5a655d" opacity="0.81"/><rect x="122" y="159" width="2" height="2" fill="#767b78" opacity="0.75"/><rect x="117" y="181" width="2" height="2" fill="#9a9d9e" opacity="0.84"/><rect x="266" y="144" width="1" height="3" fill="#9a9d9e" opacity="0.69"/><rect x="51" y="148" width="2" height="3" fill="#c4c3bd" opacity="0.71"/><rect x="4" y="153" width="4" height="1" fill="#8e928f" opacity="0.72"/><rect x="41" y="170" width="2" height="2" fill="#617366" opacity="0.79"/><rect x="205" y="178" width="2" height="1" fill="#535957" opacity="0.82"/><rect x="330" y="181" width="2" height="2" fill="#767b78" opacity="0.84"/><rect x="65" y="111" width="3" height="1" fill="#9ea2a8" opacity="0.50"/><rect x="201" y="127" width="4" height="2" fill="#767b78" opacity="0.62"/><rect x="300" y="167" width="2" height="2" fill="#6a6f6d" opacity="0.78"/><rect x="308" y="113" width="3" height="2" fill="#9ea2a8" opacity="0.50"/><rect x="355" y="151" width="2" height="3" fill="#c4c3bd" opacity="0.72"/><rect x="233" y="123" width="2" height="3" fill="#7f848a" opacity="0.50"/><rect x="268" y="113" width="4" height="3" fill="#6f757b" opacity="0.50"/><rect x="315" y="115" width="3" height="4" fill="#6f757b" opacity="0.50"/><rect x="42" y="186" width="2" height="1" fill="#617366" opacity="0.86"/><rect x="242" y="169" width="1" height="2" fill="#8e928f" opacity="0.79"/><rect x="5" y="118" width="3" height="3" fill="#7f848a" opacity="0.50"/><rect x="362" y="161" width="2" height="3" fill="#947a70" opacity="0.76"/><rect x="170" y="190" width="2" height="1" fill="#a39d94" opacity="0.87"/><rect x="215" y="118" width="3" height="2" fill="#b0b3b8" opacity="0.50"/><rect x="270" y="186" width="3" height="2" fill="#8e928f" opacity="0.86"/><rect x="98" y="112" width="3" height="4" fill="#8c9196" opacity="0.50"/><rect x="227" y="139" width="2" height="4" fill="#8396a4" opacity="0.67"/><rect x="304" y="158" width="3" height="3" fill="#c4c3bd" opacity="0.75"/><rect x="126" y="193" width="2" height="2" fill="#535957" opacity="0.89"/><rect x="110" y="121" width="3" height="2" fill="#6f757b" opacity="0.50"/><rect x="244" y="182" width="2" height="1" fill="#2f3a33" opacity="0.84"/><rect x="263" y="117" width="4" height="2" fill="#6f757b" opacity="0.50"/><rect x="230" y="124" width="3" height="4" fill="#b2afa7" opacity="0.61"/><rect x="20" y="187" width="2" height="1" fill="#a39d94" opacity="0.86"/><rect x="307" y="117" width="3" height="3" fill="#b0b3b8" opacity="0.50"/><rect x="271" y="185" width="2" height="2" fill="#2f3a33" opacity="0.85"/><rect x="350" y="192" width="1" height="1" fill="#b3b4b2" opacity="0.88"/><rect x="313" y="149" width="2" height="3" fill="#3f4644" opacity="0.71"/><rect x="187" y="189" width="2" height="1" fill="#45524a" opacity="0.87"/><rect x="91" y="126" width="3" height="4" fill="#617366" opacity="0.62"/><rect x="92" y="161" width="1" height="3" fill="#b2afa7" opacity="0.76"/><rect x="223" y="168" width="3" height="2" fill="#947a70" opacity="0.79"/><rect x="71" y="148" width="1" height="4" fill="#617366" opacity="0.71"/><rect x="318" y="123" width="2" height="1" fill="#b0b3b8" opacity="0.50"/><rect x="207" y="119" width="3" height="3" fill="#8c9196" opacity="0.50"/><rect x="300" y="125" width="2" height="2" fill="#535957" opacity="0.61"/><rect x="37" y="154" width="3" height="3" fill="#6a6f6d" opacity="0.73"/><rect x="215" y="177" width="2" height="1" fill="#535957" opacity="0.82"/><rect x="33" y="136" width="2" height="3" fill="#84888a" opacity="0.65"/><rect x="64" y="180" width="2" height="1" fill="#84888a" opacity="0.83"/><rect x="256" y="136" width="1" height="2" fill="#b2afa7" opacity="0.66"/><rect x="223" y="174" width="1" height="1" fill="#8e928f" opacity="0.81"/><rect x="355" y="128" width="3" height="4" fill="#535957" opacity="0.62"/><rect x="323" y="183" width="2" height="2" fill="#947a70" opacity="0.85"/><rect x="225" y="179" width="1" height="2" fill="#8e928f" opacity="0.83"/><rect x="259" y="156" width="1" height="3" fill="#9a9d9e" opacity="0.74"/><rect x="110" y="120" width="3" height="4" fill="#b0b3b8" opacity="0.50"/><rect x="119" y="123" width="2" height="2" fill="#9ea2a8" opacity="0.50"/><rect x="11" y="143" width="3" height="3" fill="#a39d94" opacity="0.69"/><rect x="50" y="138" width="2" height="2" fill="#617366" opacity="0.66"/><rect x="228" y="146" width="2" height="4" fill="#2f3a33" opacity="0.70"/><rect x="324" y="173" width="2" height="2" fill="#5a655d" opacity="0.81"/><rect x="277" y="145" width="3" height="1" fill="#5a655d" opacity="0.69"/><rect x="232" y="180" width="1" height="3" fill="#617366" opacity="0.84"/><rect x="77" y="185" width="2" height="2" fill="#45524a" opacity="0.86"/><rect x="164" y="118" width="4" height="5" fill="#7f848a" opacity="0.50"/><rect x="213" y="157" width="2" height="2" fill="#3f4644" opacity="0.74"/><rect x="190" y="184" width="2" height="2" fill="#8396a4" opacity="0.85"/><rect x="94" y="194" width="2" height="2" fill="#9a9d9e" opacity="0.89"/><rect x="62" y="161" width="1" height="1" fill="#5a655d" opacity="0.76"/><rect x="223" y="144" width="2" height="3" fill="#6a6f6d" opacity="0.69"/><rect x="236" y="142" width="2" height="4" fill="#c4c3bd" opacity="0.68"/><rect x="148" y="133" width="1" height="3" fill="#b2afa7" opacity="0.64"/><rect x="251" y="127" width="2" height="1" fill="#767b78" opacity="0.62"/><rect x="330" y="187" width="2" height="2" fill="#c4c3bd" opacity="0.86"/><rect x="202" y="141" width="3" height="4" fill="#5a655d" opacity="0.68"/><rect x="350" y="191" width="1" height="2" fill="#9a9d9e" opacity="0.88"/><rect x="239" y="112" width="2" height="1" fill="#b0b3b8" opacity="0.50"/><rect x="129" y="125" width="2" height="2" fill="#767b78" opacity="0.61"/><rect x="359" y="152" width="2" height="2" fill="#9a9d9e" opacity="0.72"/><rect x="95" y="128" width="3" height="4" fill="#3f4644" opacity="0.62"/><rect x="340" y="119" width="3" height="3" fill="#6f757b" opacity="0.50"/><rect x="3" y="124" width="1" height="3" fill="#b0b3b8" opacity="0.50"/><rect x="0" y="112" width="1" height="4" fill="#9ea2a8" opacity="0.50"/><rect x="61" y="140" width="3" height="2" fill="#8396a4" opacity="0.67"/><rect x="279" y="192" width="2" height="2" fill="#c4c3bd" opacity="0.88"/><rect x="52" y="130" width="1" height="1" fill="#617366" opacity="0.63"/><rect x="185" y="168" width="2" height="2" fill="#535957" opacity="0.79"/><rect x="325" y="149" width="3" height="3" fill="#8e928f" opacity="0.71"/><rect x="113" y="114" width="4" height="4" fill="#7f848a" opacity="0.50"/><rect x="200" y="130" width="2" height="4" fill="#3f4644" opacity="0.63"/><rect x="89" y="152" width="2" height="1" fill="#5a655d" opacity="0.72"/><rect x="93" y="165" width="2" height="2" fill="#a39d94" opacity="0.77"/><rect x="223" y="189" width="2" height="2" fill="#5a655d" opacity="0.87"/><rect x="272" y="188" width="2" height="2" fill="#2f3a33" opacity="0.87"/><rect x="63" y="126" width="1" height="3" fill="#767b78" opacity="0.61"/><rect x="88" y="172" width="3" height="3" fill="#45524a" opacity="0.80"/><rect x="43" y="163" width="2" height="3" fill="#9a9d9e" opacity="0.77"/><rect x="288" y="128" width="2" height="4" fill="#617366" opacity="0.62"/><rect x="66" y="159" width="2" height="1" fill="#6a6f6d" opacity="0.75"/><rect x="106" y="190" width="2" height="2" fill="#84888a" opacity="0.88"/><rect x="7" y="183" width="2" height="1" fill="#5a655d" opacity="0.85"/><rect x="334" y="146" width="2" height="3" fill="#45524a" opacity="0.70"/><rect x="369" y="147" width="3" height="2" fill="#45524a" opacity="0.70"/><rect x="300" y="129" width="2" height="3" fill="#9a9d9e" opacity="0.63"/><rect x="216" y="151" width="3" height="3" fill="#b3b4b2" opacity="0.72"/><rect x="272" y="186" width="2" height="2" fill="#6a6f6d" opacity="0.86"/><rect x="347" y="118" width="1" height="5" fill="#7f848a" opacity="0.50"/><rect x="128" y="177" width="2" height="1" fill="#535957" opacity="0.82"/><rect x="39" y="125" width="3" height="2" fill="#6a6f6d" opacity="0.61"/><rect x="365" y="184" width="2" height="1" fill="#535957" opacity="0.85"/><rect x="93" y="129" width="4" height="3" fill="#535957" opacity="0.63"/><rect x="63" y="135" width="1" height="2" fill="#535957" opacity="0.65"/><rect x="313" y="122" width="3" height="2" fill="#7f848a" opacity="0.50"/><rect x="27" y="178" width="1" height="2" fill="#c4c3bd" opacity="0.83"/><rect x="152" y="129" width="2" height="3" fill="#5a655d" opacity="0.63"/><rect x="85" y="140" width="3" height="1" fill="#767b78" opacity="0.67"/><rect x="233" y="173" width="1" height="1" fill="#947a70" opacity="0.80"/><rect x="259" y="195" width="2" height="2" fill="#3f4644" opacity="0.89"/><rect x="243" y="119" width="2" height="2" fill="#6f757b" opacity="0.50"/><rect x="70" y="156" width="2" height="2" fill="#617366" opacity="0.74"/><rect x="253" y="179" width="1" height="2" fill="#617366" opacity="0.83"/><rect x="138" y="127" width="3" height="2" fill="#6a6f6d" opacity="0.62"/><rect x="107" y="136" width="3" height="1" fill="#3f4644" opacity="0.66"/><rect x="330" y="183" width="3" height="2" fill="#9a9d9e" opacity="0.85"/><rect x="74" y="118" width="2" height="4" fill="#7f848a" opacity="0.50"/><rect x="347" y="118" width="2" height="3" fill="#8c9196" opacity="0.50"/><rect x="117" y="187" width="3" height="2" fill="#84888a" opacity="0.86"/><rect x="260" y="135" width="3" height="4" fill="#9a9d9e" opacity="0.65"/><rect x="54" y="149" width="2" height="1" fill="#617366" opacity="0.71"/><rect x="77" y="179" width="2" height="2" fill="#6a6f6d" opacity="0.83"/><rect x="321" y="151" width="1" height="1" fill="#a39d94" opacity="0.72"/><rect x="14" y="164" width="3" height="3" fill="#b3b4b2" opacity="0.77"/><rect x="342" y="131" width="2" height="4" fill="#2f3a33" opacity="0.64"/><rect x="348" y="162" width="2" height="2" fill="#45524a" opacity="0.76"/><rect x="47" y="196" width="2" height="2" fill="#767b78" opacity="0.90"/><rect x="160" y="114" width="1" height="2" fill="#b0b3b8" opacity="0.50"/><rect x="294" y="182" width="3" height="1" fill="#8e928f" opacity="0.84"/><rect x="41" y="117" width="4" height="2" fill="#7f848a" opacity="0.50"/><rect x="179" y="195" width="2" height="2" fill="#9a9d9e" opacity="0.90"/><rect x="256" y="195" width="2" height="1" fill="#b3b4b2" opacity="0.89"/><rect x="46" y="191" width="2" height="2" fill="#6a6f6d" opacity="0.88"/><rect x="132" y="174" width="1" height="2" fill="#8e928f" opacity="0.81"/><rect x="276" y="188" width="1" height="2" fill="#535957" opacity="0.87"/><rect x="31" y="138" width="3" height="4" fill="#2f3a33" opacity="0.66"/><rect x="155" y="191" width="2" height="1" fill="#6a6f6d" opacity="0.88"/><rect x="69" y="120" width="2" height="3" fill="#9ea2a8" opacity="0.50"/><rect x="23" y="161" width="3" height="1" fill="#5a655d" opacity="0.76"/><rect x="117" y="185" width="2" height="2" fill="#947a70" opacity="0.85"/><rect x="201" y="185" width="3" height="2" fill="#9a9d9e" opacity="0.85"/><rect x="155" y="128" width="2" height="3" fill="#5a655d" opacity="0.62"/><rect x="132" y="163" width="2" height="2" fill="#9a9d9e" opacity="0.76"/><rect x="68" y="137" width="3" height="4" fill="#8e928f" opacity="0.66"/><rect x="197" y="181" width="3" height="1" fill="#767b78" opacity="0.84"/><rect x="251" y="154" width="3" height="3" fill="#3f4644" opacity="0.73"/><rect x="263" y="169" width="2" height="3" fill="#9a9d9e" opacity="0.79"/><rect x="234" y="153" width="2" height="2" fill="#767b78" opacity="0.73"/><rect x="140" y="159" width="2" height="1" fill="#8e928f" opacity="0.75"/><rect x="242" y="164" width="1" height="3" fill="#6a6f6d" opacity="0.77"/><rect x="362" y="117" width="2" height="3" fill="#9ea2a8" opacity="0.50"/><rect x="116" y="121" width="2" height="4" fill="#b0b3b8" opacity="0.50"/><rect x="189" y="144" width="2" height="3" fill="#b3b4b2" opacity="0.69"/><rect x="170" y="138" width="1" height="3" fill="#45524a" opacity="0.66"/><rect x="122" y="148" width="3" height="1" fill="#5a655d" opacity="0.70"/><rect x="221" y="137" width="3" height="3" fill="#5a655d" opacity="0.66"/><rect x="76" y="137" width="3" height="1" fill="#a39d94" opacity="0.66"/><rect x="162" y="151" width="2" height="3" fill="#5a655d" opacity="0.72"/><rect x="62" y="172" width="2" height="2" fill="#84888a" opacity="0.80"/><rect x="11" y="187" width="2" height="1" fill="#45524a" opacity="0.86"/><rect x="158" y="189" width="1" height="2" fill="#84888a" opacity="0.87"/><rect x="233" y="112" width="4" height="3" fill="#7f848a" opacity="0.50"/><rect x="99" y="193" width="3" height="2" fill="#c4c3bd" opacity="0.89"/><rect x="310" y="131" width="3" height="3" fill="#767b78" opacity="0.63"/><rect x="84" y="123" width="4" height="2" fill="#6f757b" opacity="0.50"/><rect x="190" y="154" width="2" height="3" fill="#5a655d" opacity="0.73"/><rect x="130" y="170" width="2" height="1" fill="#2f3a33" opacity="0.79"/><rect x="278" y="161" width="3" height="3" fill="#947a70" opacity="0.76"/><rect x="337" y="175" width="2" height="1" fill="#767b78" opacity="0.82"/><rect x="35" y="157" width="2" height="3" fill="#947a70" opacity="0.74"/><rect x="328" y="122" width="3" height="2" fill="#b0b3b8" opacity="0.50"/><rect x="63" y="123" width="3" height="1" fill="#b0b3b8" opacity="0.50"/><rect x="71" y="130" width="3" height="3" fill="#3f4644" opacity="0.63"/><rect x="297" y="163" width="3" height="3" fill="#a39d94" opacity="0.76"/><rect x="6" y="155" width="2" height="2" fill="#947a70" opacity="0.73"/><rect x="138" y="178" width="3" height="2" fill="#5a655d" opacity="0.83"/><rect x="22" y="138" width="4" height="3" fill="#45524a" opacity="0.67"/><rect x="139" y="186" width="2" height="2" fill="#767b78" opacity="0.86"/><rect x="41" y="147" width="2" height="2" fill="#6a6f6d" opacity="0.70"/><rect x="221" y="180" width="2" height="2" fill="#617366" opacity="0.83"/><rect x="157" y="188" width="2" height="1" fill="#767b78" opacity="0.87"/><rect x="267" y="128" width="2" height="1" fill="#947a70" opacity="0.62"/><rect x="274" y="133" width="4" height="2" fill="#3f4644" opacity="0.64"/><rect x="63" y="111" width="4" height="1" fill="#7f848a" opacity="0.50"/><rect x="5" y="161" width="2" height="3" fill="#b3b4b2" opacity="0.76"/><rect x="260" y="121" width="2" height="4" fill="#6f757b" opacity="0.50"/><rect x="279" y="121" width="3" height="2" fill="#6f757b" opacity="0.50"/><rect x="369" y="166" width="3" height="3" fill="#45524a" opacity="0.78"/><rect x="215" y="156" width="2" height="2" fill="#9a9d9e" opacity="0.74"/><rect x="252" y="193" width="2" height="1" fill="#a39d94" opacity="0.89"/><rect x="333" y="117" width="4" height="4" fill="#b0b3b8" opacity="0.50"/><rect x="184" y="138" width="3" height="3" fill="#8396a4" opacity="0.66"/><rect x="167" y="134" width="4" height="2" fill="#9a9d9e" opacity="0.65"/><rect x="211" y="167" width="1" height="2" fill="#b3b4b2" opacity="0.78"/><rect x="34" y="135" width="3" height="4" fill="#b3b4b2" opacity="0.65"/><rect x="47" y="153" width="3" height="2" fill="#3f4644" opacity="0.73"/><rect x="333" y="151" width="3" height="3" fill="#c4c3bd" opacity="0.72"/><rect x="40" y="127" width="2" height="4" fill="#947a70" opacity="0.62"/><rect x="140" y="130" width="2" height="3" fill="#b3b4b2" opacity="0.63"/><rect x="291" y="163" width="2" height="2" fill="#8396a4" opacity="0.77"/><rect x="65" y="164" width="2" height="2" fill="#5a655d" opacity="0.77"/><rect x="181" y="149" width="3" height="3" fill="#a39d94" opacity="0.71"/><rect x="337" y="160" width="2" height="1" fill="#6a6f6d" opacity="0.75"/><rect x="0" y="150" width="1" height="3" fill="#8396a4" opacity="0.71"/><rect x="221" y="174" width="2" height="2" fill="#c4c3bd" opacity="0.81"/><rect x="91" y="142" width="2" height="4" fill="#9a9d9e" opacity="0.68"/><rect x="182" y="126" width="3" height="2" fill="#8e928f" opacity="0.62"/><rect x="165" y="117" width="3" height="3" fill="#b0b3b8" opacity="0.50"/><rect x="112" y="189" width="1" height="2" fill="#2f3a33" opacity="0.87"/><rect x="333" y="131" width="2" height="2" fill="#9a9d9e" opacity="0.64"/><rect x="244" y="110" width="3" height="2" fill="#b0b3b8" opacity="0.50"/><rect x="5" y="181" width="2" height="2" fill="#a39d94" opacity="0.84"/><rect x="10" y="136" width="1" height="4" fill="#535957" opacity="0.66"/><rect x="285" y="172" width="2" height="2" fill="#3f4644" opacity="0.80"/><rect x="311" y="128" width="2" height="1" fill="#45524a" opacity="0.62"/><rect x="192" y="180" width="2" height="1" fill="#b2afa7" opacity="0.83"/><rect x="162" y="150" width="3" height="2" fill="#8396a4" opacity="0.71"/><rect x="201" y="123" width="2" height="4" fill="#9ea2a8" opacity="0.50"/><rect x="275" y="122" width="1" height="1" fill="#9ea2a8" opacity="0.50"/><rect x="187" y="190" width="1" height="2" fill="#617366" opacity="0.88"/><rect x="129" y="157" width="2" height="2" fill="#84888a" opacity="0.74"/><rect x="42" y="171" width="1" height="3" fill="#5a655d" opacity="0.80"/><rect x="134" y="128" width="1" height="4" fill="#a39d94" opacity="0.62"/><rect x="362" y="167" width="2" height="2" fill="#8396a4" opacity="0.78"/><rect x="307" y="170" width="3" height="2" fill="#84888a" opacity="0.80"/><rect x="293" y="129" width="4" height="1" fill="#c4c3bd" opacity="0.63"/><rect x="61" y="179" width="2" height="2" fill="#84888a" opacity="0.83"/><rect x="276" y="115" width="3" height="2" fill="#b0b3b8" opacity="0.50"/><rect x="72" y="183" width="1" height="1" fill="#c4c3bd" opacity="0.85"/><rect x="156" y="114" width="3" height="3" fill="#6f757b" opacity="0.50"/><rect x="331" y="186" width="2" height="2" fill="#535957" opacity="0.86"/><rect x="202" y="125" width="2" height="3" fill="#45524a" opacity="0.61"/><rect x="297" y="133" width="2" height="2" fill="#8e928f" opacity="0.64"/><rect x="254" y="151" width="3" height="2" fill="#8396a4" opacity="0.72"/><rect x="6" y="127" width="2" height="4" fill="#6a6f6d" opacity="0.62"/><rect x="361" y="164" width="1" height="2" fill="#8e928f" opacity="0.77"/><rect x="336" y="134" width="2" height="3" fill="#c4c3bd" opacity="0.65"/><rect x="308" y="117" width="3" height="4" fill="#b0b3b8" opacity="0.50"/><rect x="18" y="127" width="1" height="3" fill="#8396a4" opacity="0.62"/><rect x="34" y="123" width="3" height="4" fill="#9ea2a8" opacity="0.50"/><rect x="51" y="165" width="3" height="2" fill="#8e928f" opacity="0.78"/><rect x="302" y="126" width="3" height="1" fill="#5a655d" opacity="0.62"/><rect x="16" y="131" width="4" height="1" fill="#2f3a33" opacity="0.63"/><rect x="21" y="112" width="1" height="2" fill="#b0b3b8" opacity="0.50"/><rect x="274" y="144" width="3" height="4" fill="#3f4644" opacity="0.69"/><rect x="198" y="156" width="3" height="3" fill="#b3b4b2" opacity="0.74"/><rect x="221" y="176" width="1" height="1" fill="#9a9d9e" opacity="0.82"/><rect x="18" y="181" width="2" height="2" fill="#9a9d9e" opacity="0.84"/><rect x="51" y="145" width="3" height="2" fill="#767b78" opacity="0.69"/><rect x="170" y="180" width="2" height="1" fill="#b3b4b2" opacity="0.83"/><rect x="205" y="148" width="2" height="3" fill="#b3b4b2" opacity="0.70"/><rect x="344" y="112" width="3" height="1" fill="#8c9196" opacity="0.50"/><rect x="75" y="182" width="3" height="1" fill="#947a70" opacity="0.84"/><rect x="47" y="145" width="3" height="2" fill="#a39d94" opacity="0.69"/><rect x="286" y="111" width="4" height="5" fill="#6f757b" opacity="0.50"/><rect x="366" y="124" width="4" height="2" fill="#8e928f" opacity="0.61"/><rect x="281" y="139" width="2" height="2" fill="#8396a4" opacity="0.67"/><rect x="115" y="188" width="2" height="1" fill="#6a6f6d" opacity="0.87"/><rect x="104" y="164" width="3" height="2" fill="#947a70" opacity="0.77"/><rect x="321" y="129" width="3" height="4" fill="#767b78" opacity="0.63"/><rect x="363" y="130" width="3" height="4" fill="#a39d94" opacity="0.63"/><rect x="367" y="129" width="2" height="4" fill="#5a655d" opacity="0.63"/><rect x="107" y="123" width="3" height="1" fill="#b0b3b8" opacity="0.50"/><rect x="98" y="128" width="2" height="1" fill="#767b78" opacity="0.62"/><rect x="212" y="155" width="2" height="3" fill="#8396a4" opacity="0.73"/><rect x="5" y="131" width="3" height="1" fill="#535957" opacity="0.64"/><rect x="247" y="148" width="2" height="2" fill="#767b78" opacity="0.70"/><rect x="339" y="187" width="2" height="2" fill="#3f4644" opacity="0.86"/><rect x="183" y="162" width="3" height="2" fill="#45524a" opacity="0.76"/><rect x="52" y="122" width="2" height="2" fill="#b0b3b8" opacity="0.50"/><rect x="159" y="133" width="3" height="4" fill="#9a9d9e" opacity="0.64"/><rect x="360" y="161" width="2" height="2" fill="#767b78" opacity="0.76"/><rect x="6" y="195" width="2" height="2" fill="#a39d94" opacity="0.90"/><rect x="130" y="149" width="2" height="2" fill="#947a70" opacity="0.71"/><rect x="287" y="153" width="1" height="2" fill="#947a70" opacity="0.73"/><rect x="266" y="131" width="3" height="4" fill="#3f4644" opacity="0.63"/><rect x="15" y="144" width="2" height="2" fill="#8e928f" opacity="0.69"/><rect x="41" y="163" width="2" height="3" fill="#617366" opacity="0.77"/><rect x="217" y="156" width="1" height="2" fill="#45524a" opacity="0.74"/><rect x="62" y="195" width="1" height="2" fill="#617366" opacity="0.90"/><rect x="356" y="145" width="3" height="4" fill="#84888a" opacity="0.69"/><rect x="10" y="115" width="4" height="2" fill="#b0b3b8" opacity="0.50"/><rect x="0" y="177" width="1" height="2" fill="#2f3a33" opacity="0.82"/><rect x="74" y="170" width="3" height="1" fill="#a39d94" opacity="0.80"/><rect x="292" y="130" width="4" height="3" fill="#c4c3bd" opacity="0.63"/><rect x="212" y="191" width="1" height="2" fill="#84888a" opacity="0.88"/><rect x="144" y="112" width="2" height="1" fill="#6f757b" opacity="0.50"/><rect x="252" y="131" width="3" height="2" fill="#9a9d9e" opacity="0.64"/><rect x="219" y="172" width="2" height="1" fill="#8e928f" opacity="0.80"/><rect x="82" y="116" width="3" height="2" fill="#9ea2a8" opacity="0.50"/><rect x="153" y="163" width="2" height="3" fill="#c4c3bd" opacity="0.76"/><rect x="262" y="125" width="2" height="4" fill="#c4c3bd" opacity="0.61"/><rect x="294" y="147" width="3" height="1" fill="#9a9d9e" opacity="0.70"/><rect x="48" y="117" width="3" height="3" fill="#9ea2a8" opacity="0.50"/><rect x="286" y="173" width="2" height="2" fill="#8396a4" opacity="0.80"/><rect x="178" y="168" width="3" height="2" fill="#b2afa7" opacity="0.78"/><rect x="335" y="160" width="3" height="2" fill="#535957" opacity="0.76"/><rect x="22" y="135" width="2" height="2" fill="#b2afa7" opacity="0.65"/><rect x="145" y="154" width="2" height="3" fill="#2f3a33" opacity="0.73"/><rect x="273" y="133" width="4" height="2" fill="#45524a" opacity="0.64"/><rect x="195" y="130" width="4" height="2" fill="#8396a4" opacity="0.63"/><rect x="132" y="182" width="2" height="1" fill="#84888a" opacity="0.84"/><rect x="186" y="130" width="2" height="3" fill="#767b78" opacity="0.63"/><rect x="233" y="118" width="3" height="3" fill="#7f848a" opacity="0.50"/><rect x="350" y="136" width="3" height="2" fill="#535957" opacity="0.65"/><rect x="25" y="160" width="1" height="2" fill="#617366" opacity="0.75"/><rect x="295" y="162" width="2" height="2" fill="#b2afa7" opacity="0.76"/><rect x="103" y="131" width="1" height="3" fill="#45524a" opacity="0.63"/><rect x="109" y="154" width="3" height="1" fill="#a39d94" opacity="0.73"/><rect x="337" y="112" width="4" height="1" fill="#8c9196" opacity="0.50"/><rect x="44" y="194" width="2" height="2" fill="#5a655d" opacity="0.89"/><rect x="143" y="128" width="3" height="4" fill="#535957" opacity="0.62"/><rect x="220" y="126" width="4" height="4" fill="#45524a" opacity="0.62"/><rect x="355" y="146" width="2" height="2" fill="#3f4644" opacity="0.70"/><rect x="291" y="122" width="4" height="4" fill="#b0b3b8" opacity="0.50"/><rect x="343" y="146" width="1" height="2" fill="#a39d94" opacity="0.70"/><rect x="32" y="196" width="2" height="2" fill="#947a70" opacity="0.90"/><rect x="360" y="153" width="3" height="3" fill="#b2afa7" opacity="0.73"/><rect x="205" y="146" width="2" height="3" fill="#84888a" opacity="0.70"/><rect x="73" y="125" width="4" height="3" fill="#b2afa7" opacity="0.61"/><rect x="344" y="147" width="2" height="2" fill="#a39d94" opacity="0.70"/><rect x="70" y="114" width="4" height="4" fill="#b0b3b8" opacity="0.50"/><rect x="112" y="156" width="2" height="2" fill="#84888a" opacity="0.74"/><rect x="64" y="162" width="3" height="3" fill="#b3b4b2" opacity="0.76"/><rect x="150" y="178" width="1" height="2" fill="#617366" opacity="0.83"/><rect x="56" y="173" width="3" height="3" fill="#3f4644" opacity="0.81"/><rect x="64" y="128" width="1" height="4" fill="#45524a" opacity="0.62"/><rect x="64" y="195" width="2" height="1" fill="#8396a4" opacity="0.90"/><rect x="100" y="153" width="2" height="1" fill="#2f3a33" opacity="0.72"/><rect x="200" y="162" width="3" height="1" fill="#535957" opacity="0.76"/><rect x="360" y="134" width="3" height="1" fill="#b2afa7" opacity="0.65"/><rect x="133" y="129" width="2" height="2" fill="#84888a" opacity="0.63"/><rect x="148" y="139" width="3" height="1" fill="#45524a" opacity="0.67"/><rect x="146" y="123" width="2" height="1" fill="#b0b3b8" opacity="0.50"/><rect x="92" y="138" width="2" height="3" fill="#617366" opacity="0.66"/><rect x="9" y="162" width="2" height="2" fill="#c4c3bd" opacity="0.76"/><rect x="321" y="119" width="3" height="2" fill="#8c9196" opacity="0.50"/><rect x="269" y="189" width="1" height="1" fill="#535957" opacity="0.87"/><rect x="157" y="123" width="4" height="2" fill="#9ea2a8" opacity="0.50"/><rect x="72" y="114" width="3" height="4" fill="#8c9196" opacity="0.50"/><rect x="120" y="167" width="2" height="2" fill="#9a9d9e" opacity="0.78"/><rect x="359" y="170" width="2" height="2" fill="#b2afa7" opacity="0.80"/><rect x="334" y="168" width="1" height="1" fill="#6a6f6d" opacity="0.79"/><rect x="287" y="112" width="3" height="4" fill="#7f848a" opacity="0.50"/><rect x="163" y="162" width="2" height="2" fill="#617366" opacity="0.76"/><rect x="225" y="115" width="4" height="2" fill="#8c9196" opacity="0.50"/><rect x="304" y="127" width="2" height="2" fill="#767b78" opacity="0.62"/><rect x="225" y="147" width="3" height="3" fill="#2f3a33" opacity="0.70"/><rect x="273" y="140" width="2" height="2" fill="#767b78" opacity="0.67"/><rect x="19" y="119" width="2" height="4" fill="#8c9196" opacity="0.50"/><rect x="27" y="144" width="2" height="4" fill="#9a9d9e" opacity="0.69"/><rect x="115" y="141" width="2" height="1" fill="#b2afa7" opacity="0.67"/><rect x="241" y="150" width="1" height="2" fill="#535957" opacity="0.71"/><rect x="169" y="120" width="2" height="3" fill="#8c9196" opacity="0.50"/><rect x="273" y="141" width="2" height="2" fill="#b2afa7" opacity="0.68"/><rect x="331" y="189" width="1" height="2" fill="#947a70" opacity="0.87"/><rect x="89" y="154" width="2" height="3" fill="#b2afa7" opacity="0.73"/><rect x="221" y="192" width="3" height="1" fill="#3f4644" opacity="0.88"/><rect x="45" y="134" width="1" height="4" fill="#45524a" opacity="0.65"/><rect x="330" y="137" width="1" height="2" fill="#3f4644" opacity="0.66"/><rect x="311" y="148" width="3" height="3" fill="#535957" opacity="0.71"/><rect x="35" y="165" width="2" height="3" fill="#3f4644" opacity="0.77"/><rect x="51" y="169" width="1" height="1" fill="#947a70" opacity="0.79"/><rect x="92" y="178" width="1" height="2" fill="#8e928f" opacity="0.83"/><rect x="68" y="137" width="3" height="4" fill="#45524a" opacity="0.66"/><rect x="174" y="130" width="2" height="3" fill="#535957" opacity="0.63"/><rect x="304" y="186" width="2" height="1" fill="#b2afa7" opacity="0.86"/><rect x="88" y="118" width="3" height="4" fill="#6f757b" opacity="0.50"/><rect x="349" y="166" width="1" height="2" fill="#5a655d" opacity="0.78"/><rect x="150" y="172" width="2" height="3" fill="#45524a" opacity="0.80"/><rect x="102" y="190" width="2" height="1" fill="#2f3a33" opacity="0.87"/><rect x="87" y="182" width="1" height="1" fill="#535957" opacity="0.85"/><rect x="195" y="131" width="3" height="4" fill="#2f3a33" opacity="0.64"/><rect x="366" y="141" width="3" height="2" fill="#c4c3bd" opacity="0.68"/><rect x="24" y="115" width="2" height="3" fill="#9ea2a8" opacity="0.50"/><rect x="176" y="121" width="1" height="2" fill="#7f848a" opacity="0.50"/><rect x="82" y="141" width="3" height="1" fill="#947a70" opacity="0.67"/><rect x="294" y="122" width="3" height="3" fill="#7f848a" opacity="0.50"/><rect x="25" y="154" width="1" height="2" fill="#84888a" opacity="0.73"/><rect x="78" y="162" width="1" height="3" fill="#45524a" opacity="0.76"/><rect x="313" y="125" width="3" height="4" fill="#617366" opacity="0.61"/><rect x="341" y="178" width="2" height="1" fill="#9a9d9e" opacity="0.83"/><rect x="319" y="150" width="2" height="3" fill="#9a9d9e" opacity="0.71"/><rect x="142" y="161" width="3" height="1" fill="#c4c3bd" opacity="0.76"/><rect x="225" y="189" width="1" height="2" fill="#767b78" opacity="0.87"/><rect x="285" y="152" width="2" height="2" fill="#9a9d9e" opacity="0.72"/><rect x="179" y="162" width="2" height="2" fill="#535957" opacity="0.76"/><rect x="287" y="146" width="3" height="2" fill="#84888a" opacity="0.70"/><rect x="314" y="152" width="2" height="2" fill="#5a655d" opacity="0.72"/><rect x="270" y="114" width="3" height="4" fill="#7f848a" opacity="0.50"/><rect x="225" y="171" width="1" height="2" fill="#a39d94" opacity="0.80"/><rect x="104" y="169" width="2" height="3" fill="#9a9d9e" opacity="0.79"/><rect x="239" y="128" width="1" height="3" fill="#9a9d9e" opacity="0.62"/><rect x="314" y="137" width="3" height="4" fill="#84888a" opacity="0.66"/><rect x="333" y="120" width="2" height="2" fill="#9ea2a8" opacity="0.50"/><rect x="209" y="121" width="4" height="4" fill="#7f848a" opacity="0.50"/><rect x="302" y="170" width="2" height="2" fill="#c4c3bd" opacity="0.79"/><rect x="42" y="174" width="1" height="1" fill="#3f4644" opacity="0.81"/><rect x="363" y="179" width="1" height="1" fill="#2f3a33" opacity="0.83"/><rect x="52" y="159" width="1" height="2" fill="#535957" opacity="0.75"/><rect x="0" y="121" width="2" height="2" fill="#7f848a" opacity="0.50"/><rect x="243" y="166" width="2" height="2" fill="#535957" opacity="0.78"/><rect x="72" y="118" width="2" height="3" fill="#7f848a" opacity="0.50"/><rect x="22" y="118" width="3" height="1" fill="#9ea2a8" opacity="0.50"/><rect x="184" y="111" width="1" height="4" fill="#9ea2a8" opacity="0.50"/><rect x="342" y="175" width="2" height="2" fill="#617366" opacity="0.81"/><rect x="234" y="137" width="1" height="2" fill="#c4c3bd" opacity="0.66"/><rect x="242" y="120" width="2" height="2" fill="#7f848a" opacity="0.50"/><rect x="359" y="120" width="2" height="3" fill="#6f757b" opacity="0.50"/><rect x="129" y="183" width="3" height="2" fill="#5a655d" opacity="0.85"/><rect x="303" y="161" width="2" height="2" fill="#45524a" opacity="0.76"/><rect x="313" y="195" width="2" height="1" fill="#535957" opacity="0.90"/><rect x="358" y="189" width="2" height="1" fill="#3f4644" opacity="0.87"/><rect x="289" y="165" width="3" height="1" fill="#767b78" opacity="0.77"/><rect x="103" y="150" width="3" height="3" fill="#a39d94" opacity="0.71"/><rect x="121" y="126" width="3" height="2" fill="#8396a4" opacity="0.62"/><rect x="216" y="145" width="2" height="2" fill="#2f3a33" opacity="0.69"/><rect x="105" y="181" width="2" height="2" fill="#3f4644" opacity="0.84"/><rect x="215" y="126" width="4" height="4" fill="#617366" opacity="0.61"/><rect x="171" y="153" width="1" height="2" fill="#5a655d" opacity="0.72"/><rect x="31" y="165" width="3" height="3" fill="#84888a" opacity="0.78"/><rect x="97" y="138" width="2" height="2" fill="#84888a" opacity="0.66"/><rect x="255" y="163" width="1" height="3" fill="#c4c3bd" opacity="0.77"/><rect x="79" y="116" width="2" height="3" fill="#6f757b" opacity="0.50"/><rect x="162" y="192" width="1" height="1" fill="#84888a" opacity="0.88"/><rect x="236" y="157" width="2" height="3" fill="#6a6f6d" opacity="0.74"/><rect x="327" y="163" width="1" height="2" fill="#5a655d" opacity="0.76"/><rect x="114" y="174" width="2" height="2" fill="#767b78" opacity="0.81"/><rect x="133" y="177" width="2" height="2" fill="#947a70" opacity="0.82"/><rect x="107" y="120" width="2" height="2" fill="#b0b3b8" opacity="0.50"/><rect x="192" y="119" width="3" height="4" fill="#b0b3b8" opacity="0.50"/><rect x="80" y="120" width="3" height="1" fill="#7f848a" opacity="0.50"/><rect x="300" y="128" width="2" height="2" fill="#b3b4b2" opacity="0.62"/><rect x="75" y="175" width="3" height="2" fill="#5a655d" opacity="0.81"/><rect x="207" y="142" width="4" height="3" fill="#8396a4" opacity="0.68"/><rect x="244" y="145" width="4" height="3" fill="#617366" opacity="0.69"/><rect x="30" y="142" width="3" height="2" fill="#617366" opacity="0.68"/><rect x="62" y="127" width="2" height="4" fill="#3f4644" opacity="0.62"/><rect x="74" y="173" width="1" height="2" fill="#2f3a33" opacity="0.81"/><rect x="358" y="189" width="2" height="2" fill="#8396a4" opacity="0.87"/><rect x="278" y="191" width="2" height="2" fill="#8e928f" opacity="0.88"/><rect x="228" y="115" width="1" height="4" fill="#9ea2a8" opacity="0.50"/><rect x="315" y="118" width="1" height="3" fill="#7f848a" opacity="0.50"/><rect x="347" y="152" width="3" height="1" fill="#9a9d9e" opacity="0.72"/><rect x="189" y="130" width="2" height="2" fill="#2f3a33" opacity="0.63"/><rect x="37" y="186" width="1" height="1" fill="#5a655d" opacity="0.86"/><rect x="10" y="119" width="3" height="2" fill="#9ea2a8" opacity="0.50"/><rect x="170" y="162" width="1" height="1" fill="#a39d94" opacity="0.76"/><rect x="82" y="143" width="1" height="3" fill="#2f3a33" opacity="0.68"/><rect x="37" y="139" width="1" height="4" fill="#617366" opacity="0.67"/><rect x="23" y="118" width="4" height="4" fill="#8c9196" opacity="0.50"/><rect x="98" y="195" width="2" height="1" fill="#947a70" opacity="0.90"/><rect x="199" y="150" width="2" height="3" fill="#a39d94" opacity="0.71"/><rect x="14" y="139" width="3" height="2" fill="#c4c3bd" opacity="0.67"/><rect x="274" y="176" width="1" height="2" fill="#a39d94" opacity="0.82"/><rect x="275" y="160" width="3" height="3" fill="#3f4644" opacity="0.75"/><rect x="103" y="193" width="2" height="1" fill="#617366" opacity="0.89"/><rect x="195" y="118" width="1" height="3" fill="#b0b3b8" opacity="0.50"/><rect x="168" y="150" width="1" height="3" fill="#3f4644" opacity="0.71"/><rect x="142" y="188" width="2" height="1" fill="#6a6f6d" opacity="0.87"/><rect x="368" y="136" width="3" height="3" fill="#617366" opacity="0.65"/><rect x="360" y="185" width="2" height="2" fill="#6a6f6d" opacity="0.86"/><rect x="96" y="140" width="2" height="2" fill="#5a655d" opacity="0.67"/><rect x="119" y="176" width="3" height="2" fill="#b2afa7" opacity="0.82"/><rect x="318" y="138" width="3" height="4" fill="#535957" opacity="0.66"/><rect x="360" y="182" width="2" height="2" fill="#767b78" opacity="0.84"/><rect x="189" y="164" width="3" height="1" fill="#b3b4b2" opacity="0.77"/><rect x="176" y="159" width="3" height="2" fill="#6a6f6d" opacity="0.75"/><rect x="164" y="154" width="2" height="1" fill="#2f3a33" opacity="0.73"/><rect x="156" y="138" width="2" height="2" fill="#b3b4b2" opacity="0.66"/><rect x="330" y="140" width="3" height="2" fill="#8e928f" opacity="0.67"/><rect x="48" y="118" width="4" height="3" fill="#6f757b" opacity="0.50"/><rect x="187" y="154" width="1" height="1" fill="#767b78" opacity="0.73"/><rect x="112" y="163" width="3" height="1" fill="#2f3a33" opacity="0.77"/><rect x="120" y="143" width="2" height="3" fill="#2f3a33" opacity="0.68"/><rect x="246" y="112" width="4" height="5" fill="#b0b3b8" opacity="0.50"/><rect x="176" y="135" width="3" height="3" fill="#45524a" opacity="0.65"/><rect x="202" y="125" width="4" height="1" fill="#3f4644" opacity="0.61"/><rect x="124" y="144" width="1" height="2" fill="#84888a" opacity="0.69"/><rect x="62" y="183" width="3" height="1" fill="#c4c3bd" opacity="0.85"/><rect x="125" y="168" width="1" height="3" fill="#b2afa7" opacity="0.79"/><rect x="342" y="165" width="3" height="2" fill="#947a70" opacity="0.77"/><rect x="160" y="111" width="3" height="4" fill="#8c9196" opacity="0.50"/><rect x="325" y="154" width="2" height="1" fill="#a39d94" opacity="0.73"/><rect x="356" y="150" width="1" height="3" fill="#8396a4" opacity="0.71"/><rect x="321" y="182" width="2" height="1" fill="#8396a4" opacity="0.84"/><rect x="267" y="195" width="2" height="2" fill="#535957" opacity="0.89"/><rect x="50" y="114" width="2" height="2" fill="#b0b3b8" opacity="0.50"/><rect x="343" y="143" width="3" height="3" fill="#b3b4b2" opacity="0.69"/><rect x="312" y="136" width="1" height="3" fill="#b2afa7" opacity="0.66"/><rect x="98" y="157" width="2" height="1" fill="#8e928f" opacity="0.74"/><rect x="332" y="123" width="3" height="4" fill="#7f848a" opacity="0.50"/><rect x="192" y="194" width="1" height="2" fill="#5a655d" opacity="0.89"/><rect x="307" y="123" width="1" height="3" fill="#b0b3b8" opacity="0.50"/><rect x="228" y="159" width="3" height="1" fill="#947a70" opacity="0.75"/><rect x="132" y="185" width="1" height="2" fill="#8e928f" opacity="0.86"/><rect x="46" y="190" width="1" height="2" fill="#8e928f" opacity="0.88"/><rect x="213" y="169" width="3" height="2" fill="#2f3a33" opacity="0.79"/><rect x="98" y="120" width="12" height="24" fill="#3f4548" opacity="0.7"/><rect x="148" y="130" width="6" height="16" fill="#252b36" opacity="0.7"/><rect x="158" y="124" width="9" height="22" fill="#73787c" opacity="0.7"/><rect x="300" y="115" width="6" height="12" fill="#4d5256" opacity="0.7"/><rect x="155" y="100" width="3" height="12" fill="#6a6f74" opacity="0.7"/><rect x="126" y="122" width="5" height="20" fill="#868b90" opacity="0.7"/><rect x="350" y="130" width="14" height="45" fill="#6e7478" opacity="0.7"/><rect x="5" y="158" width="30" height="8" fill="#b8b2ac" opacity="0.7"/><rect x="70" y="160" width="20" height="6" fill="#a9a8a2" opacity="0.7"/><rect x="225" y="120" width="4" height="15" fill="#777" opacity="0.7"/><ellipse cx="330" cy="200" rx="70" ry="26" fill="url(#tree)"/><ellipse cx="60" cy="207" rx="100" ry="14" fill="url(#tree)" opacity="0.8"/><ellipse cx="180" cy="208" rx="100" ry="12" fill="url(#tree)" opacity="0.8"/><ellipse cx="130" cy="158" rx="40" ry="10" fill="url(#tree)" opacity="0.3"/><ellipse cx="240" cy="150" rx="30" ry="8" fill="url(#tree)" opacity="0.25"/><rect x="0" y="200" width="370" height="8" fill="#28302a" opacity="0.75"/></symbol></svg>

<!-- ============ LEFT NAV ============ -->
<div id="nav" class="a">
  <svg class="a" style="left:15px;top:25px" width="65" height="50" viewBox="0 0 65 50">
    <path d="M11 39.2 L11 16.5 Q11 12.9 15.5 12.9 Q17 13 18 13.6 L43.3 29.6 L43.3 35.8 L17 19.1 L17 35.5 Z" fill="#3597fa"/>
    <path d="M34 20.4 L45.2 13.4 L46 13.2 L46 18.8 L38.4 23.7 Z" fill="#109c48"/>
    <path d="M46 13 Q51 13 51 17 L51 40.9 L46 37.6 Z" fill="#5cbf6d"/>
  </svg>
  <svg class="a" style="left:0;top:0" width="93" height="930" viewBox="0 0 93 930" fill="none" stroke="#b9bbc0" stroke-width="1.6">
    <!-- content -->
    <g fill="#ffffff" stroke="none">
      <rect x="32" y="136" width="13.2" height="13.2" rx="2"/>
      <rect x="46.8" y="136" width="13.2" height="13.2" rx="2"/>
      <rect x="32" y="150.8" width="13.2" height="13.2" rx="2"/>
      <rect x="46.8" y="150.8" width="13.2" height="13.2" rx="2"/>
    </g>
    <!-- playlist -->
    <path d="M37.8 220.8 V218.2 Q37.8 216.8 39.2 216.8 H57.8 Q59.2 216.8 59.2 218.2 V236.5 Q59.2 237.9 57.8 237.9 H54.6"/>
    <rect x="32.8" y="221.6" width="21.4" height="21.8" rx="1.6"/>
    <path d="M40.6 228.2 L48.4 232.8 L40.6 237.6 Z" stroke-width="1.5"/>
    <!-- ruleset -->
    <circle cx="36" cy="308" r="3.9"/>
    <path d="M39.9 308 H43.7"/>
    <path d="M48.5 301.9 H46 Q43.7 301.9 43.7 304.2 V319.6 Q43.7 322 46 322 H48.5"/>
    <rect x="48.9" y="298.9" width="10.6" height="6.4" rx="0.6"/>
    <rect x="48.9" y="319" width="10.6" height="6.4" rx="0.6"/>
    <!-- schedule -->
    <rect x="32.8" y="383.6" width="26.6" height="23.6" rx="2"/>
    <path d="M32.8 389.8 H59.4"/>
    <path d="M37.8 380 V384 M54.2 380 V384"/>
    <path d="M42.1 398.3 L45.6 401.6 L50.6 396.3"/>
    <!-- device -->
    <path d="M40.7 483.2 H34.8 Q32.8 483.2 32.8 481.2 V466.4 Q32.8 464.4 34.8 464.4 H57.4 Q59.4 464.4 59.4 466.4 V481.2 Q59.4 483.2 57.4 483.2 H52"/>
    <path d="M46.3 480.9 L51.8 487.2 H40.8 Z"/>
    <!-- statistics -->
    <rect x="32.8" y="546.8" width="26.6" height="22.6" rx="2"/>
    <g fill="#c2c3c7" stroke="none">
      <rect x="37" y="553" width="1.8" height="12.9"/>
      <rect x="41.1" y="560" width="1.8" height="5.9"/>
      <rect x="45.1" y="556" width="1.8" height="9.9"/>
      <rect x="49.2" y="559" width="1.8" height="6.9"/>
      <rect x="53.2" y="563" width="1.8" height="2.9"/>
    </g>
    <!-- insight -->
    <circle cx="46" cy="640" r="13.6" stroke-width="1.3"/>
    <path d="M46 626.4 V640 H59.6 M46 640 L36.5 630.6 M46 640 L37.8 650.4" stroke-width="1.3"/>
    <!-- user -->
    <circle cx="45.4" cy="714.4" r="6" stroke-width="1.5"/>
    <path d="M36.6 735.6 V731.4 Q36.6 723.6 45.6 723.6 Q54.6 723.6 54.6 731.4 V735.6 Z" stroke-width="1.5"/>
    <!-- setting -->
    <path d="M42 790.8 H50 L51.2 795 L55.4 792.6 L59.4 799.6 L56 803.8 L59.4 808 L55.4 815 L51.2 812.6 L50 816.8 H42 L40.8 812.6 L36.6 815 L32.6 808 L36 803.8 L32.6 799.6 L36.6 792.6 L40.8 795 Z" stroke-linejoin="round" stroke-width="1.5"/>
    <circle cx="46" cy="803.8" r="5.8" stroke-width="1.3"/>
  </svg>
<div class="nl" style="top:175.39px;color:#ffffff;-webkit-text-stroke:0.35px #fff">Content</div>
<div class="nl" style="top:257.59px;color:#c3c6cc">Playlist</div>
<div class="nl" style="top:339.49px;color:#c3c6cc">RuleSet</div>
<div class="nl" style="top:421.79px;color:#c3c6cc">Schedule</div>
<div class="nl" style="top:503.69px;color:#c3c6cc">Device</div>
<div class="nl" style="top:585.29px;color:#c3c6cc">Statistics</div>
<div class="nl" style="top:667.59px;color:#c3c6cc">Insight</div>
<div class="nl" style="top:749.49px;color:#c3c6cc">User</div>
<div class="nl" style="top:831.39px;color:#c3c6cc">Setting</div>
</div>

<!-- ============ SIDE PANEL ============ -->
<div id="side" class="a">
  <svg class="a" style="left:-12px;top:138px" width="13" height="25" viewBox="0 0 13 25"><path d="M13 0 L1 12.5 L13 25 Z" fill="#343b4d"/></svg>
</div>
<div class="t" style="left:115px;top:45.4px;font-size:21px;color:#fff;transform:scaleX(0.94);transform-origin:0 0">Content</div>
<svg class="a" style="left:300px;top:40px" width="30" height="28" viewBox="0 0 30 28" fill="none" stroke="#e6e8ec" stroke-width="1.3"><path d="M7 13.5 H25.3 M14.6 6 L7 13.5 L14.6 21"/></svg>
<div class="pill" style="left:115px;top:100px;width:100px;height:28px;border:1.5px solid #d3d6dc;border-radius:14px"></div>
<div class="t" style="left:115px;top:107.6px;width:100px;text-align:center;font-size:12.5px;letter-spacing:-0.2px;color:#c9ccd3">Web Author</div>
<div class="pill" style="left:225px;top:100px;width:100px;height:28px;border:1.5px solid #d3d6dc;border-radius:14px"></div>
<div class="t" style="left:225px;top:107.6px;width:80px;text-align:center;font-size:12.5px;color:#c9ccd3">New</div>
<svg class="a" style="left:306px;top:110px" width="12" height="8" viewBox="0 0 12 8" fill="none" stroke="#a9adb5" stroke-width="1"><path d="M2.5 1.8 L5.7 5.2 L8.9 1.8"/></svg>
<div class="a" style="left:115px;top:151px;width:210px;height:1px;background:#525a6b"></div>
<div class="t" style="left:115px;top:165.25px;font-size:14px;color:#3c93f5;letter-spacing:-0.12px">All Contents</div>
<div class="t" style="left:115px;top:207.25px;font-size:14px;color:#e3e5ea;letter-spacing:-0.12px">My Contents</div>
<div class="t" style="left:115px;top:249.15px;font-size:14px;color:#e3e5ea;letter-spacing:-0.12px">Shared Contents</div>
<div class="t" style="left:115px;top:291.05px;font-size:14px;color:#e3e5ea;letter-spacing:-0.12px">By User</div>
<div class="t" style="left:115px;top:333.25px;font-size:14px;color:#e3e5ea;letter-spacing:-0.12px">Unapproved Content</div>
<div class="t" style="left:115px;top:375.15px;font-size:14px;color:#e3e5ea;letter-spacing:-0.12px">Template</div>
<div class="t" style="left:115px;top:417.15px;font-size:14px;color:#e3e5ea;letter-spacing:-0.12px">Recycle Bin</div>
<div class="a" style="left:257px;top:333px;width:34px;height:16px;border-radius:8px;background:#e6e6e6"></div>
<div class="t" style="left:257px;top:336.3px;width:34px;text-align:center;font-size:11px;color:#333">76</div>
<svg class="a" style="left:306px;top:413px" width="20" height="22" viewBox="0 0 20 22" fill="none" stroke="#b9bcc2" stroke-width="1.2"><path d="M3.6 5 H16.6 M8.3 5 V3.4 H11.9 V5 M5 5.4 L6.2 18.4 H14 L15.2 5.4"/></svg>


<!-- ============ TAB BAR ============ -->
<div id="tabbar" class="a"></div>
<div class="a" style="left:366px;top:29px;width:204px;height:42px;background:#e6e9f2"></div>
<svg class="a" style="left:380px;top:44px" width="13" height="13" viewBox="0 0 13 13" fill="none" stroke="#777" stroke-width="1"><rect x="1.5" y="1.3" width="10.2" height="10.6" rx="0.8"/><circle cx="4.5" cy="4.6" r="1.1"/><circle cx="8.5" cy="4.6" r="1.1"/><circle cx="4.5" cy="8.6" r="1.1"/><circle cx="8.5" cy="8.6" r="1.1"/></svg>
<div class="t" style="left:401.5px;top:44.84px;font-size:12px;color:#333;letter-spacing:-0.25px">Dashboard</div>
<div class="a" style="left:570px;top:29px;width:204px;height:42px;background:#fff"></div>
<svg class="a" style="left:584px;top:44px" width="13" height="13" viewBox="0 0 13 13" fill="none" stroke="#3c93f5" stroke-width="1.1"><rect x="1.55" y="1.55" width="3.9" height="3.9" rx="0.4"/><rect x="7.55" y="1.55" width="3.9" height="3.9" rx="0.4"/><rect x="1.55" y="7.55" width="3.9" height="3.9" rx="0.4"/><rect x="7.55" y="7.55" width="3.9" height="3.9" rx="0.4"/></svg>
<div class="t" style="left:605.4px;top:44.84px;font-size:12px;color:#3c93f5;letter-spacing:-0.15px">Content</div>
<svg class="a" style="left:748px;top:43px" width="12" height="12" viewBox="0 0 12 12" fill="none" stroke="#333" stroke-width="1.3"><path d="M2.6 2.2 L9.8 9.4 M9.8 2.2 L2.6 9.4"/></svg>

<!-- toolbar -->
<div class="pill" style="left:386px;top:91px;width:72px;height:28px;border:1px solid #c6c6c6;border-radius:14px"></div>
<div class="t" style="left:412.5px;top:98.84px;font-size:12px;color:#c8c8c8;">Edit</div>
<div class="pill" style="left:468px;top:91px;width:72px;height:28px;border:1px solid #c6c6c6;border-radius:14px"></div>
<div class="t" style="left:486.5px;top:98.84px;font-size:12px;color:#c8c8c8;">Delete</div>
<div class="pill" style="left:1340px;top:91px;width:130px;height:28px;border:1.5px solid #333;border-radius:14px"></div>
<div class="t" style="left:1386px;top:98.84px;font-size:12px;color:#333;">Category</div>
<svg class="a" style="left:1450px;top:100px" width="12" height="10" viewBox="0 0 12 10" fill="none" stroke="#555" stroke-width="1"><path d="M3 3 L6.4 6.3 L9.8 3"/></svg>

<!-- table header -->
<div class="a" style="left:346px;top:148px;width:1134px;height:32px;background:#efefef;border-bottom:1px solid #d4d4d4;border-left:1px solid #e2e2e2"></div>
<div class="a" style="left:346px;top:180px;width:1134px;height:14px;background:linear-gradient(#ececec,rgba(255,255,255,0))"></div>
<div class="a" style="left:357px;top:156px;width:15px;height:15px;background:#fff"></div>
<div class="a" style="left:392px;top:156px;width:1px;height:17px;background:repeating-linear-gradient(#aaa 0 1px,transparent 1px 2px)"></div>
<div class="t" style="left:403px;top:158.84px;font-size:12px;color:#555;">Content</div>
<div class="t" style="left:1423.5px;top:159.04px;font-size:12px;color:#555;">Date Modified</div>
<div class="a" style="left:392px;top:180px;width:1px;height:686px;background:#f1f1f1"></div>
<div class="t" style="left:1417.5px;top:199.74px;font-size:12px;color:#6a6a6a;">about 2 days</div>
<div class="t" style="left:1423px;top:219.74px;font-size:12px;color:#6a6a6a;">2021-05-18</div>
<div class="t" style="left:1417.5px;top:272.54px;font-size:12px;color:#6a6a6a;">about 3 days</div>
<div class="t" style="left:1423px;top:292.54px;font-size:12px;color:#6a6a6a;">2021-05-17</div>
<div class="t" style="left:1417.5px;top:347.54px;font-size:12px;color:#6a6a6a;">about 3 days</div>
<div class="t" style="left:1423px;top:367.54px;font-size:12px;color:#6a6a6a;">2021-05-17</div>
<div class="t" style="left:1417.5px;top:422.54px;font-size:12px;color:#6a6a6a;">about 3 days</div>
<div class="t" style="left:1423px;top:442.54px;font-size:12px;color:#6a6a6a;">2021-05-17</div>
<div class="t" style="left:1417.5px;top:497.54px;font-size:12px;color:#6a6a6a;">about 3 days</div>
<div class="t" style="left:1423px;top:517.54px;font-size:12px;color:#6a6a6a;">2021-05-17</div>
<div class="t" style="left:1417.5px;top:572.54px;font-size:12px;color:#6a6a6a;">about 6 days</div>
<div class="t" style="left:1423px;top:592.54px;font-size:12px;color:#6a6a6a;">2021-05-14</div>
<div class="t" style="left:1417.5px;top:647.54px;font-size:12px;color:#6a6a6a;">about 7 days</div>
<div class="t" style="left:1423px;top:667.54px;font-size:12px;color:#6a6a6a;">2021-05-13</div>
<div class="t" style="left:1417.5px;top:722.54px;font-size:12px;color:#6a6a6a;">about 8 days</div>
<div class="t" style="left:1423px;top:742.54px;font-size:12px;color:#6a6a6a;">2021-05-12</div>
<div class="t" style="left:1417.5px;top:797.54px;font-size:12px;color:#6a6a6a;">about 8 days</div>
<div class="t" style="left:1423px;top:817.54px;font-size:12px;color:#6a6a6a;">2021-05-12</div>
<div class="rowb" style="top:250px"></div>
<div class="rowb" style="top:325px"></div>
<div class="rowb" style="top:400px"></div>
<div class="rowb" style="top:475px"></div>
<div class="rowb" style="top:550px"></div>
<div class="rowb" style="top:625px"></div>
<div class="rowb" style="top:700px"></div>
<div class="rowb" style="top:775px"></div>
<div class="rowb" style="top:850px"></div>
<div class="a" style="left:519px;top:180px;width:1px;height:686px;background:#f1f1f1"></div>
<div class="a" style="left:970px;top:180px;width:1px;height:686px;background:#f1f1f1"></div>
<div class="a" style="left:1164px;top:180px;width:1px;height:686px;background:#f1f1f1"></div>
<div class="a" style="left:1412px;top:180px;width:1px;height:686px;background:#f1f1f1"></div>
<div class="t" style="left:975px;top:861px;font-size:9px;color:#777">NOVET</div>
<!-- thumbnails -->
<div class="a" style="left:414px;top:187px;width:84px;height:56px;background:#d0d1d3"></div>
<svg class="a" style="left:441px;top:197.7px" width="30" height="34" viewBox="0 0 30 34"><path d="M2 1.5 H21.5 L28.4 8.5 V32 H2 Z" fill="#fff"/><path d="M21.5 1.5 V8.5 H28.4 Z" fill="#e0e0e0"/><rect x="0.8" y="12" width="19.5" height="11" fill="#e84343"/><text x="10.5" y="21" font-family="Liberation Sans" font-size="8" font-weight="700" fill="#fff" text-anchor="middle">FTP</text></svg>
<div class="a" style="left:406px;top:260px;width:92px;height:56px;background:#ececec"></div>
<div class="a" style="left:444px;top:287px;width:24px;height:1px;background:#cfcfcf"></div>
<svg class="a" style="left:406px;top:335px" width="92" height="56" viewBox="0 0 92 56"><rect width="92" height="56" fill="#141414"/><rect width="92" height="6" fill="#000"/><rect y="50" width="92" height="6" fill="#000"/><rect x="24" y="30" width="5" height="3" fill="#8a5a3a" opacity="0.55"/><rect x="26" y="27" width="2" height="3" fill="#6b6a6a" opacity="0.55"/><rect x="15" y="25" width="2" height="4" fill="#5d4038" opacity="0.55"/><rect x="29" y="44" width="4" height="3" fill="#6b6a6a" opacity="0.55"/><rect x="28" y="32" width="2" height="4" fill="#9a8a88" opacity="0.55"/><rect x="18" y="18" width="3" height="5" fill="#5d4038" opacity="0.55"/><rect x="19" y="45" width="2" height="4" fill="#6b6a6a" opacity="0.55"/><rect x="5" y="19" width="5" height="5" fill="#a07d70" opacity="0.55"/><rect x="15" y="21" width="3" height="4" fill="#5d4038" opacity="0.55"/><rect x="23" y="40" width="2" height="5" fill="#8c6a5c" opacity="0.55"/><rect x="18" y="21" width="4" height="3" fill="#b08a80" opacity="0.55"/><rect x="31" y="26" width="3" height="5" fill="#8a5a3a" opacity="0.55"/><rect x="22" y="33" width="6" height="3" fill="#9a8a88" opacity="0.55"/><rect x="28" y="24" width="3" height="4" fill="#7a5548" opacity="0.55"/><rect x="25" y="15" width="2" height="4" fill="#a07d70" opacity="0.55"/><rect x="32" y="23" width="2" height="4" fill="#7a5548" opacity="0.55"/><rect x="17" y="10" width="4" height="2" fill="#6b6a6a" opacity="0.55"/><rect x="20" y="32" width="5" height="2" fill="#5d4038" opacity="0.55"/><rect x="22" y="31" width="4" height="3" fill="#b08a80" opacity="0.55"/><rect x="24" y="37" width="4" height="2" fill="#5d4038" opacity="0.55"/><rect x="17" y="33" width="4" height="4" fill="#9a8a88" opacity="0.55"/><rect x="14" y="22" width="5" height="3" fill="#a07d70" opacity="0.55"/><rect x="27" y="28" width="6" height="3" fill="#5d4038" opacity="0.55"/><rect x="14" y="20" width="4" height="2" fill="#a07d70" opacity="0.55"/><rect x="33" y="33" width="3" height="5" fill="#8a5a3a" opacity="0.55"/><rect x="27" y="34" width="2" height="3" fill="#b08a80" opacity="0.55"/><rect x="17" y="29" width="3" height="5" fill="#8a5a3a" opacity="0.55"/><rect x="25" y="28" width="3" height="3" fill="#6b6a6a" opacity="0.55"/><rect x="25" y="18" width="3" height="4" fill="#6b6a6a" opacity="0.55"/><rect x="46" y="32" width="6" height="5" fill="#8c6a5c" opacity="0.55"/><rect x="38" y="23" width="5" height="5" fill="#7a5548" opacity="0.55"/><rect x="30" y="29" width="4" height="4" fill="#5d4038" opacity="0.55"/><rect x="14" y="14" width="5" height="3" fill="#9a8a88" opacity="0.55"/><rect x="15" y="16" width="4" height="5" fill="#6b6a6a" opacity="0.55"/><rect x="28" y="25" width="3" height="2" fill="#6b6a6a" opacity="0.55"/><rect x="13" y="33" width="2" height="3" fill="#6b6a6a" opacity="0.55"/><rect x="20" y="18" width="5" height="5" fill="#b08a80" opacity="0.55"/><rect x="24" y="27" width="2" height="4" fill="#5d4038" opacity="0.55"/><rect x="38" y="36" width="3" height="2" fill="#8a5a3a" opacity="0.55"/><rect x="29" y="22" width="6" height="5" fill="#9a8a88" opacity="0.55"/><rect x="33" y="22" width="2" height="2" fill="#8c6a5c" opacity="0.55"/><rect x="4" y="27" width="2" height="4" fill="#5d4038" opacity="0.55"/><rect x="42" y="34" width="4" height="4" fill="#7a5548" opacity="0.55"/><rect x="26" y="23" width="5" height="3" fill="#b08a80" opacity="0.55"/><rect x="26" y="19" width="5" height="5" fill="#a07d70" opacity="0.55"/><rect x="28" y="28" width="6" height="5" fill="#9a8a88" opacity="0.55"/><rect x="10" y="32" width="2" height="3" fill="#b08a80" opacity="0.55"/><rect x="9" y="12" width="5" height="2" fill="#b08a80" opacity="0.55"/><rect x="26" y="21" width="3" height="3" fill="#5d4038" opacity="0.55"/><rect x="15" y="40" width="6" height="2" fill="#6b6a6a" opacity="0.55"/><rect x="24" y="25" width="2" height="2" fill="#6b6a6a" opacity="0.55"/><rect x="8" y="27" width="6" height="2" fill="#b08a80" opacity="0.55"/><rect x="14" y="25" width="4" height="3" fill="#6b6a6a" opacity="0.55"/><rect x="27" y="3" width="2" height="4" fill="#7a5548" opacity="0.55"/><rect x="3" y="21" width="6" height="5" fill="#6b6a6a" opacity="0.55"/><rect x="16" y="20" width="4" height="4" fill="#5d4038" opacity="0.55"/><rect x="33" y="25" width="2" height="3" fill="#8a5a3a" opacity="0.55"/><rect x="18" y="16" width="4" height="3" fill="#6b6a6a" opacity="0.55"/><rect x="16" y="23" width="2" height="5" fill="#8c6a5c" opacity="0.55"/><rect x="11" y="12" width="4" height="4" fill="#9a8a88" opacity="0.55"/><rect x="33" y="41" width="6" height="2" fill="#7a5548" opacity="0.55"/><rect x="30" y="12" width="3" height="3" fill="#8c6a5c" opacity="0.55"/><rect x="14" y="21" width="2" height="3" fill="#8c6a5c" opacity="0.55"/><rect x="15" y="16" width="6" height="4" fill="#a07d70" opacity="0.55"/><rect x="33" y="16" width="5" height="3" fill="#a07d70" opacity="0.55"/><rect x="21" y="31" width="6" height="5" fill="#9a8a88" opacity="0.55"/><rect x="32" y="21" width="4" height="4" fill="#8a5a3a" opacity="0.55"/><rect x="12" y="30" width="3" height="5" fill="#6b6a6a" opacity="0.55"/><rect x="19" y="16" width="5" height="5" fill="#9a8a88" opacity="0.55"/><rect x="20" y="23" width="5" height="4" fill="#8c6a5c" opacity="0.55"/><rect x="17" y="22" width="4" height="5" fill="#8c6a5c" opacity="0.55"/><rect x="28" y="44" width="3" height="3" fill="#8c6a5c" opacity="0.55"/><rect x="29" y="28" width="3" height="5" fill="#7a5548" opacity="0.55"/><rect x="28" y="14" width="2" height="3" fill="#6b6a6a" opacity="0.55"/><rect x="26" y="29" width="4" height="2" fill="#7a5548" opacity="0.55"/><rect x="27" y="28" width="6" height="3" fill="#6b6a6a" opacity="0.55"/><rect x="22" y="14" width="2" height="4" fill="#5d4038" opacity="0.55"/><rect x="18" y="14" width="6" height="5" fill="#5d4038" opacity="0.55"/><rect x="35" y="39" width="6" height="2" fill="#b08a80" opacity="0.55"/><rect x="20" y="29" width="6" height="5" fill="#6b6a6a" opacity="0.55"/><rect x="16" y="24" width="4" height="3" fill="#8a5a3a" opacity="0.55"/><rect x="16" y="31" width="4" height="2" fill="#7a5548" opacity="0.55"/><rect x="18" y="39" width="3" height="2" fill="#8c6a5c" opacity="0.55"/><rect x="35" y="14" width="3" height="2" fill="#a07d70" opacity="0.55"/><rect x="8" y="28" width="5" height="5" fill="#5d4038" opacity="0.55"/><rect x="21" y="30" width="2" height="5" fill="#a07d70" opacity="0.55"/><rect x="8" y="14" width="5" height="2" fill="#6b6a6a" opacity="0.55"/><rect x="27" y="21" width="5" height="4" fill="#6b6a6a" opacity="0.55"/><rect x="25" y="23" width="4" height="2" fill="#a07d70" opacity="0.55"/><rect x="16" y="16" width="6" height="5" fill="#9a8a88" opacity="0.55"/><path d="M5 47 Q8 41 12 47 Z" fill="#e58fb0"/><rect x="5" y="46.5" width="7" height="2.5" fill="#d878a0"/><path d="M55 56 L56 46 Q58 40 66 40 L72 40 Q76 42 75 50 L74 56 Z" fill="#e0a070"/><rect x="68" y="44" width="24" height="12" fill="#a89ca8"/><path d="M58 44 Q58 32 66 29 L76 29 Q82 32 82 44 L74 46 L66 42 Z" fill="#d39a30"/><path d="M70 29 L74 32 L78 29 Z" fill="#eee"/><ellipse cx="71.5" cy="19" rx="9.5" ry="10" fill="#3a2e26"/><ellipse cx="71" cy="21" rx="8.6" ry="8" fill="#e5a676"/><ellipse cx="68.5" cy="17.5" rx="3" ry="2.6" fill="#efe0c8"/><ellipse cx="74.5" cy="17.5" rx="3" ry="2.6" fill="#efe0c8"/><circle cx="69" cy="18" r="0.8" fill="#333"/><circle cx="74" cy="18" r="0.8" fill="#333"/><rect x="56" y="48" width="5" height="8" fill="#e6d5b5"/><rect x="63" y="48" width="5" height="8" fill="#e6d5b5"/></svg>
<svg class="a" style="left:406px;top:410px" width="92" height="56" viewBox="0 0 92 56"><rect width="92" height="56" fill="#000"/><path d="M46 12 L52 28 L70 28 L55 38 L62 54 L46 44 L30 54 L37 38 L22 28 L40 28 Z" fill="none" stroke="#141414" stroke-width="0.7"/><text x="46" y="31" font-family="Liberation Sans" font-size="7" fill="#3a3a3a" text-anchor="middle" letter-spacing="0.5">UP FOR AIR</text></svg>
<svg class="a" style="left:406px;top:485px" width="92" height="56" viewBox="0 0 92 56"><defs><radialGradient id="gl" cx="0.55" cy="0.5" r="0.6"><stop offset="0" stop-color="#8c8c8c"/><stop offset="0.6" stop-color="#5a5a5a"/><stop offset="1" stop-color="#262626"/></radialGradient></defs><rect width="92" height="56" fill="url(#gl)"/><rect x="15" y="39" width="3" height="2" fill="#555" opacity="0.45"/><rect x="78" y="55" width="2" height="3" fill="#9a9a9a" opacity="0.45"/><rect x="49" y="44" width="3" height="3" fill="#000" opacity="0.45"/><rect x="39" y="8" width="2" height="3" fill="#111" opacity="0.45"/><rect x="4" y="56" width="4" height="3" fill="#555" opacity="0.45"/><rect x="41" y="54" width="4" height="3" fill="#777" opacity="0.45"/><rect x="11" y="53" width="1" height="1" fill="#222" opacity="0.45"/><rect x="68" y="5" width="4" height="1" fill="#000" opacity="0.45"/><rect x="51" y="19" width="2" height="1" fill="#9a9a9a" opacity="0.45"/><rect x="61" y="26" width="1" height="1" fill="#111" opacity="0.45"/><rect x="19" y="54" width="1" height="1" fill="#555" opacity="0.45"/><rect x="52" y="31" width="2" height="2" fill="#9a9a9a" opacity="0.45"/><rect x="85" y="50" width="3" height="2" fill="#9a9a9a" opacity="0.45"/><rect x="88" y="28" width="4" height="2" fill="#222" opacity="0.45"/><rect x="24" y="47" width="4" height="1" fill="#111" opacity="0.45"/><rect x="45" y="31" width="2" height="3" fill="#555" opacity="0.45"/><rect x="56" y="31" width="1" height="1" fill="#777" opacity="0.45"/><rect x="62" y="35" width="3" height="3" fill="#222" opacity="0.45"/><rect x="86" y="14" width="1" height="1" fill="#111" opacity="0.45"/><rect x="71" y="21" width="1" height="3" fill="#555" opacity="0.45"/><rect x="48" y="37" width="4" height="1" fill="#111" opacity="0.45"/><rect x="88" y="33" width="4" height="3" fill="#222" opacity="0.45"/><rect x="35" y="14" width="2" height="3" fill="#111" opacity="0.45"/><rect x="6" y="45" width="4" height="1" fill="#555" opacity="0.45"/><rect x="77" y="3" width="3" height="1" fill="#222" opacity="0.45"/><rect x="39" y="10" width="3" height="3" fill="#000" opacity="0.45"/><rect x="83" y="55" width="4" height="1" fill="#555" opacity="0.45"/><rect x="23" y="54" width="4" height="1" fill="#777" opacity="0.45"/><rect x="88" y="50" width="2" height="2" fill="#222" opacity="0.45"/><rect x="55" y="24" width="4" height="2" fill="#777" opacity="0.45"/><rect x="13" y="33" width="1" height="2" fill="#111" opacity="0.45"/><rect x="63" y="53" width="3" height="3" fill="#000" opacity="0.45"/><rect x="30" y="14" width="4" height="2" fill="#777" opacity="0.45"/><rect x="63" y="42" width="2" height="1" fill="#111" opacity="0.45"/><rect x="9" y="5" width="4" height="1" fill="#000" opacity="0.45"/><rect x="7" y="7" width="2" height="2" fill="#222" opacity="0.45"/><rect x="50" y="18" width="2" height="3" fill="#9a9a9a" opacity="0.45"/><rect x="15" y="10" width="2" height="3" fill="#9a9a9a" opacity="0.45"/><rect x="68" y="42" width="1" height="1" fill="#777" opacity="0.45"/><rect x="36" y="48" width="2" height="3" fill="#9a9a9a" opacity="0.45"/><rect x="21" y="54" width="3" height="3" fill="#777" opacity="0.45"/><rect x="4" y="22" width="3" height="3" fill="#222" opacity="0.45"/><rect x="74" y="27" width="1" height="3" fill="#777" opacity="0.45"/><rect x="55" y="28" width="3" height="3" fill="#555" opacity="0.45"/><rect x="29" y="39" width="2" height="1" fill="#777" opacity="0.45"/><rect x="57" y="18" width="3" height="1" fill="#111" opacity="0.45"/><rect x="29" y="56" width="1" height="3" fill="#000" opacity="0.45"/><rect x="7" y="46" width="1" height="3" fill="#9a9a9a" opacity="0.45"/><rect x="59" y="25" width="4" height="2" fill="#777" opacity="0.45"/><rect x="6" y="1" width="4" height="1" fill="#555" opacity="0.45"/><rect x="23" y="39" width="4" height="2" fill="#9a9a9a" opacity="0.45"/><rect x="73" y="22" width="4" height="1" fill="#222" opacity="0.45"/><rect x="58" y="54" width="1" height="2" fill="#000" opacity="0.45"/><rect x="16" y="21" width="2" height="2" fill="#777" opacity="0.45"/><rect x="58" y="42" width="3" height="1" fill="#555" opacity="0.45"/><rect x="44" y="28" width="4" height="3" fill="#222" opacity="0.45"/><rect x="89" y="55" width="2" height="2" fill="#000" opacity="0.45"/><rect x="19" y="49" width="2" height="1" fill="#555" opacity="0.45"/><rect x="51" y="4" width="4" height="3" fill="#222" opacity="0.45"/><rect x="68" y="55" width="4" height="1" fill="#111" opacity="0.45"/><rect x="62" y="21" width="2" height="2" fill="#777" opacity="0.45"/><rect x="8" y="2" width="3" height="1" fill="#777" opacity="0.45"/><rect x="83" y="28" width="3" height="3" fill="#111" opacity="0.45"/><rect x="35" y="53" width="4" height="2" fill="#9a9a9a" opacity="0.45"/><rect x="42" y="37" width="2" height="3" fill="#555" opacity="0.45"/><rect x="35" y="15" width="2" height="1" fill="#111" opacity="0.45"/><rect x="32" y="35" width="3" height="1" fill="#555" opacity="0.45"/><rect x="7" y="32" width="4" height="3" fill="#9a9a9a" opacity="0.45"/><rect x="41" y="55" width="2" height="1" fill="#777" opacity="0.45"/><rect x="90" y="11" width="1" height="2" fill="#222" opacity="0.45"/><rect x="15" y="32" width="1" height="2" fill="#9a9a9a" opacity="0.45"/><rect x="17" y="23" width="2" height="1" fill="#777" opacity="0.45"/><rect x="53" y="46" width="4" height="1" fill="#777" opacity="0.45"/><rect x="61" y="4" width="2" height="1" fill="#9a9a9a" opacity="0.45"/><rect x="5" y="46" width="4" height="2" fill="#777" opacity="0.45"/><rect x="62" y="38" width="3" height="1" fill="#111" opacity="0.45"/><rect x="32" y="17" width="1" height="1" fill="#555" opacity="0.45"/><rect x="61" y="10" width="2" height="2" fill="#000" opacity="0.45"/><rect x="25" y="3" width="4" height="2" fill="#000" opacity="0.45"/><rect x="63" y="37" width="1" height="1" fill="#111" opacity="0.45"/><rect x="21" y="20" width="4" height="1" fill="#222" opacity="0.45"/><rect x="64" y="41" width="4" height="1" fill="#777" opacity="0.45"/><rect x="30" y="12" width="1" height="3" fill="#777" opacity="0.45"/><rect x="32" y="30" width="2" height="1" fill="#555" opacity="0.45"/><rect x="65" y="28" width="4" height="1" fill="#111" opacity="0.45"/><rect x="83" y="38" width="1" height="2" fill="#111" opacity="0.45"/><rect x="36" y="53" width="3" height="1" fill="#555" opacity="0.45"/><rect x="84" y="10" width="1" height="2" fill="#222" opacity="0.45"/><rect x="60" y="9" width="4" height="1" fill="#777" opacity="0.45"/><rect x="21" y="29" width="4" height="3" fill="#222" opacity="0.45"/><rect x="71" y="53" width="2" height="2" fill="#000" opacity="0.45"/><rect x="55" y="20" width="3" height="3" fill="#555" opacity="0.45"/><rect x="12" y="2" width="1" height="3" fill="#9a9a9a" opacity="0.45"/><rect x="68" y="42" width="3" height="3" fill="#111" opacity="0.45"/><rect x="27" y="9" width="4" height="3" fill="#555" opacity="0.45"/><rect x="59" y="43" width="2" height="2" fill="#111" opacity="0.45"/><rect x="17" y="46" width="4" height="2" fill="#111" opacity="0.45"/><rect x="24" y="30" width="2" height="1" fill="#9a9a9a" opacity="0.45"/><rect x="73" y="19" width="3" height="3" fill="#9a9a9a" opacity="0.45"/><rect x="13" y="12" width="4" height="1" fill="#111" opacity="0.45"/><rect x="36" y="0" width="3" height="3" fill="#555" opacity="0.45"/><rect x="77" y="26" width="2" height="3" fill="#9a9a9a" opacity="0.45"/><rect x="51" y="43" width="1" height="1" fill="#555" opacity="0.45"/><rect x="34" y="46" width="3" height="2" fill="#9a9a9a" opacity="0.45"/><rect x="33" y="32" width="1" height="2" fill="#9a9a9a" opacity="0.45"/><rect x="69" y="21" width="4" height="1" fill="#222" opacity="0.45"/><rect x="85" y="11" width="1" height="3" fill="#222" opacity="0.45"/><rect x="28" y="35" width="3" height="1" fill="#111" opacity="0.45"/><rect x="63" y="17" width="2" height="1" fill="#111" opacity="0.45"/><rect x="46" y="40" width="1" height="3" fill="#111" opacity="0.45"/><rect x="83" y="52" width="3" height="1" fill="#777" opacity="0.45"/><rect x="18" y="8" width="3" height="3" fill="#000" opacity="0.45"/><rect x="76" y="3" width="1" height="3" fill="#777" opacity="0.45"/><rect x="21" y="39" width="3" height="2" fill="#9a9a9a" opacity="0.45"/><rect x="59" y="36" width="2" height="2" fill="#222" opacity="0.45"/><rect x="37" y="25" width="4" height="3" fill="#555" opacity="0.45"/><rect x="47" y="13" width="1" height="3" fill="#111" opacity="0.45"/><rect x="83" y="47" width="1" height="2" fill="#777" opacity="0.45"/><rect x="45" y="9" width="3" height="3" fill="#222" opacity="0.45"/><rect x="30" y="12" width="4" height="1" fill="#000" opacity="0.45"/><rect x="19" y="1" width="2" height="1" fill="#111" opacity="0.45"/><rect x="51" y="9" width="1" height="3" fill="#555" opacity="0.45"/><rect x="37" y="43" width="2" height="3" fill="#111" opacity="0.45"/><rect x="2" y="44" width="1" height="1" fill="#111" opacity="0.45"/><rect x="19" y="32" width="1" height="2" fill="#777" opacity="0.45"/><rect x="28" y="18" width="3" height="2" fill="#555" opacity="0.45"/><rect x="3" y="28" width="4" height="1" fill="#9a9a9a" opacity="0.45"/><rect x="3" y="36" width="4" height="3" fill="#222" opacity="0.45"/><rect x="24" y="46" width="3" height="2" fill="#222" opacity="0.45"/><rect x="61" y="37" width="3" height="1" fill="#9a9a9a" opacity="0.45"/><rect x="11" y="33" width="3" height="1" fill="#9a9a9a" opacity="0.45"/><rect x="69" y="8" width="4" height="1" fill="#222" opacity="0.45"/><rect x="25" y="38" width="1" height="2" fill="#111" opacity="0.45"/><rect x="69" y="46" width="1" height="3" fill="#777" opacity="0.45"/><rect x="89" y="12" width="2" height="1" fill="#222" opacity="0.45"/><rect x="45" y="17" width="4" height="1" fill="#222" opacity="0.45"/><rect x="71" y="1" width="2" height="1" fill="#777" opacity="0.45"/><rect x="3" y="12" width="1" height="3" fill="#222" opacity="0.45"/><rect x="71" y="48" width="2" height="3" fill="#9a9a9a" opacity="0.45"/><rect x="33" y="47" width="3" height="3" fill="#111" opacity="0.45"/><rect x="55" y="47" width="3" height="2" fill="#555" opacity="0.45"/><rect x="13" y="21" width="2" height="2" fill="#555" opacity="0.45"/><rect x="62" y="43" width="1" height="1" fill="#555" opacity="0.45"/><rect x="23" y="56" width="4" height="1" fill="#222" opacity="0.45"/><rect x="66" y="2" width="3" height="2" fill="#777" opacity="0.45"/><rect x="19" y="55" width="2" height="1" fill="#555" opacity="0.45"/><rect x="80" y="50" width="2" height="2" fill="#9a9a9a" opacity="0.45"/><rect x="60" y="37" width="2" height="3" fill="#111" opacity="0.45"/><rect x="83" y="21" width="2" height="3" fill="#222" opacity="0.45"/><rect x="36" y="8" width="1" height="1" fill="#000" opacity="0.45"/><rect x="42" y="43" width="1" height="3" fill="#000" opacity="0.45"/><rect x="30" y="10" width="3" height="3" fill="#777" opacity="0.45"/><rect x="41" y="40" width="4" height="3" fill="#9a9a9a" opacity="0.45"/><rect x="51" y="16" width="4" height="2" fill="#000" opacity="0.45"/><rect x="43" y="51" width="3" height="2" fill="#555" opacity="0.45"/><rect x="12" y="19" width="3" height="1" fill="#555" opacity="0.45"/><rect x="58" y="46" width="2" height="1" fill="#222" opacity="0.45"/><rect x="89" y="2" width="2" height="3" fill="#222" opacity="0.45"/><rect x="2" y="45" width="3" height="3" fill="#111" opacity="0.45"/><rect x="63" y="13" width="3" height="3" fill="#111" opacity="0.45"/><path d="M0 0 H92 V6 Q60 12 46 8 Q20 14 0 10 Z" fill="#0d0d0d" opacity="0.8"/><path d="M28 2 L34 4 L8 44 L2 42 Z" fill="#0a0a0a" opacity="0.85"/><path d="M14 6 L18 8 L0 30 L0 24 Z" fill="#0a0a0a" opacity="0.7"/><path d="M62 2 L68 2 L92 38 L92 46 Z" fill="#0a0a0a" opacity="0.85"/><path d="M76 0 L82 0 L92 14 L92 22 Z" fill="#0a0a0a" opacity="0.6"/><path d="M22 56 Q30 42 46 46 Q60 50 70 56 Z" fill="#050505" opacity="0.85"/><rect x="40" y="9" width="10" height="1.5" fill="#bbb" opacity="0.6"/><rect x="51" y="8.5" width="9" height="2.5" fill="#e02020"/><rect x="46" y="19" width="3" height="3" fill="#eee"/><rect x="53" y="19" width="2" height="6" fill="#eee"/><path d="M46 25 A4 4 0 0 0 50 31" fill="none" stroke="#3aa040" stroke-width="1.3"/><circle cx="50" cy="28" r="1.6" fill="#e08020"/><circle cx="54" cy="28" r="1" fill="#c04040"/><rect x="57" y="21" width="30" height="1.4" fill="#050505"/><rect x="85" y="24" width="7" height="1" fill="#5a8a5a"/><rect x="85" y="27" width="7" height="1" fill="#4a8ab0"/><rect x="85" y="30" width="7" height="1.5" fill="#ddd"/><rect x="85" y="33" width="7" height="1" fill="#5a7aa0"/><rect x="85" y="38" width="7" height="1" fill="#8a5ab0"/><rect x="85" y="41" width="7" height="1.5" fill="#eee"/><rect x="85" y="44" width="7" height="1" fill="#b05a5a"/><rect x="0" y="37" width="22.5" height="19" fill="#c8892a"/><rect x="0.5" y="38" width="21" height="6" fill="#3a2a18"/><rect x="2" y="39" width="17" height="2" fill="#d9b060" opacity="0.8"/><rect x="0.5" y="44.5" width="21" height="10.5" fill="#a8d4e0"/><path d="M3 55 Q6 47 9 50 Q12 46 15 52 L15 55 Z" fill="#d8a890"/></svg>
<div class="a" style="left:406px;top:560px;width:92px;height:56px;background:#ececec"></div>
<div class="a" style="left:440px;top:587px;width:28px;height:1px;background:#cfcfcf"></div>
<svg class="a" style="left:406px;top:635px" width="100" height="56" viewBox="0 0 100 56"><use href="#seoulimg" width="100" height="56"/></svg>
<svg class="a" style="left:406px;top:710px" width="100" height="56" viewBox="0 0 100 56"><use href="#seoulimg" width="100" height="56"/></svg>
<div class="a" style="left:406px;top:785px;width:92px;height:55px;background:#fbfbfc"></div>
<svg class="a" style="left:440px;top:795px" width="34" height="36" viewBox="0 0 34 36"><defs><linearGradient id="xg" x1="0" y1="0" x2="1" y2="1"><stop offset="0" stop-color="#8f3aa6"/><stop offset="1" stop-color="#d04a86"/></linearGradient></defs><path d="M3 2 H10 L16.5 12.6 L23 2 H29.8 L20.2 16.8 L30.3 33.2 H23.3 L16.5 21.6 L9.6 33.2 H2.6 L12.8 16.8 Z" fill="url(#xg)"/></svg>
<div class="a" style="left:406px;top:860px;width:100px;height:5px;background:#000"></div>

<!-- scrollbar -->
<div class="a" style="left:346px;top:866px;width:1134px;height:15px;background:#f1f1f1"></div>
<div class="a" style="left:364px;top:867px;width:1116px;height:13px;background:#c1c1c1"></div>
<svg class="a" style="left:350px;top:868px" width="10" height="10" viewBox="0 0 10 10"><path d="M6.5 2 L3 5 L6.5 8 Z" fill="#a3a3a3"/></svg>

<!-- pagination -->
<div class="t" style="left:356px;top:905.84px;font-size:12px;color:#666;">1 - 25 / 1329</div>
<div class="a" style="left:446px;top:903.5px;width:46px;height:18px;border:1px solid #767676;border-radius:2px;background:#fff"></div>
<div class="t" style="left:450px;top:905.65px;font-size:14px;color:#000;">25</div>
<svg class="a" style="left:476px;top:908px" width="12" height="10" viewBox="0 0 12 10" fill="none" stroke="#000" stroke-width="2"><path d="M2 2.5 L6 6.5 L10 2.5"/></svg>
<div class="a" style="left:1046.4px;top:898.5px;width:20.6px;height:22px;border:1px solid #dcdcdc;background:#3c93f5"></div>
<div class="t" style="left:1046.4px;top:904.34px;width:19.6px;text-align:center;font-size:12px;color:#fff">1</div>
<div class="a" style="left:1066px;top:898.5px;width:21.0px;height:22px;border:1px solid #dcdcdc;background:#fff"></div>
<div class="t" style="left:1066px;top:904.34px;width:20.0px;text-align:center;font-size:12px;color:#666">2</div>
<div class="a" style="left:1086px;top:898.5px;width:20.5px;height:22px;border:1px solid #dcdcdc;background:#fff"></div>
<div class="t" style="left:1086px;top:904.34px;width:19.5px;text-align:center;font-size:12px;color:#666">3</div>
<div class="a" style="left:1105.5px;top:898.5px;width:21.2px;height:22px;border:1px solid #dcdcdc;background:#fff"></div>
<div class="t" style="left:1105.5px;top:904.34px;width:20.2px;text-align:center;font-size:12px;color:#666">4</div>
<div class="a" style="left:1125.7px;top:898.5px;width:19.8px;height:22px;border:1px solid #dcdcdc;background:#fff"></div>
<div class="t" style="left:1125.7px;top:904.34px;width:18.8px;text-align:center;font-size:12px;color:#666">5</div>
<div class="a" style="left:1144.5px;top:898.5px;width:25.1px;height:22px;border:1px solid #dcdcdc;background:#fff"></div>
<div class="t" style="left:1144.5px;top:904.34px;width:24.1px;text-align:center;font-size:12px;color:#666">...</div>
<div class="a" style="left:1168.6px;top:898.5px;width:27.1px;height:22px;border:1px solid #dcdcdc;background:#fff"></div>
<div class="t" style="left:1168.6px;top:904.34px;width:26.1px;text-align:center;font-size:12px;color:#666">53</div>
<div class="a" style="left:1194.7px;top:898.5px;width:26.8px;height:22px;border:1px solid #dcdcdc;background:#fff"></div>
<div class="t" style="left:1194.7px;top:904.34px;width:25.8px;text-align:center;font-size:12px;color:#666">54</div>



<!-- ============ MODAL ============ -->
<div class="a" style="left:498px;top:81px;width:924px;height:770px;background:#fff;border:1px solid #c6c6c6"></div>
<div class="t" style="left:521px;top:96.76px;font-size:18px;color:#6e6e6e;">seoul</div>
<div class="a" style="left:1359px;top:106px;width:13px;height:1px;background:#9a9a9a"></div>
<svg class="a" style="left:1391px;top:98px" width="17" height="17" viewBox="0 0 17 17" fill="none" stroke="#9a9a9a" stroke-width="1.1"><path d="M3 3 L14 14 M14 3 L3 14"/></svg>
<div class="a" style="left:499px;top:129px;width:922px;height:1px;background:#f0f0f0"></div>
<svg class="a" style="left:516px;top:175px" width="370" height="208"><use href="#seoulimg"/></svg>

<!-- tabs -->
<div class="t" style="left:955.4px;top:162.64px;font-size:12px;color:#555;letter-spacing:-0.65px">Details</div><div class="t" style="left:1006.8px;top:162.64px;font-size:12px;color:#555;letter-spacing:-0.6px">Version</div><div class="t" style="left:1062.4px;top:162.64px;font-size:12px;color:#555;letter-spacing:-0.6px">Category</div><div class="t" style="left:1125px;top:162.64px;font-size:12px;color:#555;letter-spacing:-0.4px">Tag</div><div class="t" style="left:1163.9px;top:162.64px;font-size:12px;color:#3c93f5;letter-spacing:-0.5px">Advertisement</div>
<div class="a" style="left:945px;top:187px;width:420px;height:1px;background:#e2e2e2"></div>
<div class="a" style="left:1163px;top:185px;width:71px;height:2px;background:#3c93f5"></div>
<div class="t" style="left:945px;top:205.44px;font-size:12px;color:#666;">Insight Index</div>
<div class="a" style="left:945px;top:229px;width:420px;height:32px;background:#eeeeee;border:1px solid #d0d0d0"></div>
<div class="a" style="left:1207px;top:236px;width:1px;height:17px;background:repeating-linear-gradient(#aaa 0 1px,transparent 1px 2px)"></div>
<div class="t" style="left:963px;top:239.84px;font-size:12px;color:#555;">Index Name</div><div class="t" style="left:1218px;top:239.84px;font-size:12px;color:#555;">Value</div>
<div class="a" style="left:945px;top:261px;width:419px;height:48px;background:#f2f7fd"></div>
<div class="a" style="left:945px;top:309px;width:420px;height:1px;background:#ececec"></div>
<div class="a" style="left:945px;top:358px;width:420px;height:1px;background:#ececec"></div>
<div class="a" style="left:945px;top:407px;width:420px;height:1px;background:#ececec"></div>
<div class="a" style="left:945px;top:456px;width:420px;height:1px;background:#ececec"></div>
<div class="a" style="left:945px;top:505px;width:420px;height:1px;background:#ececec"></div>
<div class="t" style="left:961px;top:278.90px;font-size:13px;color:#4a4a4a;">Index1</div><div class="t" style="left:961px;top:326.80px;font-size:13px;color:#4a4a4a;">Index2</div><div class="t" style="left:960px;top:376.50px;font-size:13px;color:#4a4a4a;">Index3</div><div class="t" style="left:960px;top:424.60px;font-size:13px;color:#4a4a4a;">Index4</div><div class="t" style="left:960px;top:472.90px;font-size:13px;color:#4a4a4a;">Index5</div>
<div class="a" style="left:1225px;top:271px;width:120px;height:28px;background:#e6e9f0"></div>
<svg class="a" style="left:1327.5px;top:281.5px" width="10" height="8" viewBox="0 0 10 8" fill="none" stroke="#6a6a6a" stroke-width="1.05"><path d="M1.3 2 L5 5.6 L8.7 2"/></svg>
<svg class="a" style="left:1327.5px;top:429.5px" width="10" height="8" viewBox="0 0 10 8" fill="none" stroke="#6a6a6a" stroke-width="1.05"><path d="M1.3 2 L5 5.6 L8.7 2"/></svg>
<svg class="a" style="left:1327.5px;top:478.5px" width="10" height="8" viewBox="0 0 10 8" fill="none" stroke="#6a6a6a" stroke-width="1.05"><path d="M1.3 2 L5 5.6 L8.7 2"/></svg>
<svg class="a" style="left:1327.5px;top:585.5px" width="10" height="8" viewBox="0 0 10 8" fill="none" stroke="#6a6a6a" stroke-width="1.05"><path d="M1.3 2 L5 5.6 L8.7 2"/></svg>
<div class="t" style="left:945px;top:509.24px;font-size:12px;color:#666;">Sales Data</div>
<div class="a" style="left:945px;top:532px;width:420px;height:32px;background:#eeeeee;border:1px solid #d2d2d2"></div>
<div class="a" style="left:1207px;top:539px;width:1px;height:18px;background:repeating-linear-gradient(#aaa 0 1px,transparent 1px 2px)"></div>
<div class="t" style="left:963px;top:542.64px;font-size:12px;color:#555;">Product Code</div><div class="t" style="left:1218px;top:542.64px;font-size:12px;color:#555;">Value</div><div class="t" style="left:955px;top:582.40px;font-size:13px;color:#333;">Product Code</div>
<div class="a" style="left:945px;top:612px;width:420px;height:1px;background:#ececec"></div>
<div class="t" style="left:945px;top:648.44px;font-size:12px;color:#666;">* Please note: if you modify the index, the insight server data will be applied</div><div class="t" style="left:945px;top:663.64px;font-size:12px;color:#666;">after today.</div>
<div class="a" style="left:499px;top:773px;width:922px;height:77px;background:#fefefe;border-top:1px solid #e3e3e3"></div>
<div class="pill" style="left:1237px;top:796px;width:72px;height:28px;border:1px solid #555;border-radius:14px;background:#fff"></div>
<div class="t" style="left:1237px;top:803.84px;width:72px;text-align:center;font-size:12px;color:#333">Save</div>
<div class="pill" style="left:1329px;top:796px;width:72px;height:28px;border:1px solid #555;border-radius:14px;background:#fff"></div>
<div class="t" style="left:1329px;top:803.84px;width:72px;text-align:center;font-size:12px;color:#333">Close</div>

<!-- popup -->
<div class="a" style="left:1225px;top:308px;width:172px;height:79px;background:#fff;border:1px solid #d8dbe2;border-bottom:2px solid #d3d6dc"></div>
<svg class="a" style="left:1234px;top:300px" width="14" height="10" viewBox="0 0 14 10"><path d="M0.5 9 L7 1.5 L13.5 9" fill="#fff" stroke="#d8dbe2" stroke-width="1"/><rect x="1.5" y="8.6" width="11" height="2" fill="#fff"/></svg>
<div class="a" style="left:1239px;top:325px;width:16px;height:16px;border:1px solid #d8d8d8;border-radius:2px;background:#fcfcfc"></div>
<div class="a" style="left:1239px;top:353px;width:16px;height:16px;border:1px solid #d8d8d8;border-radius:2px;background:#fcfcfc"></div>
<div class="t" style="left:1265px;top:328.00px;font-size:13px;color:#50545c;">IndexValue1</div><div class="t" style="left:1265px;top:355.90px;font-size:13px;color:#50545c;">IndexValue2</div>

</body></html>
